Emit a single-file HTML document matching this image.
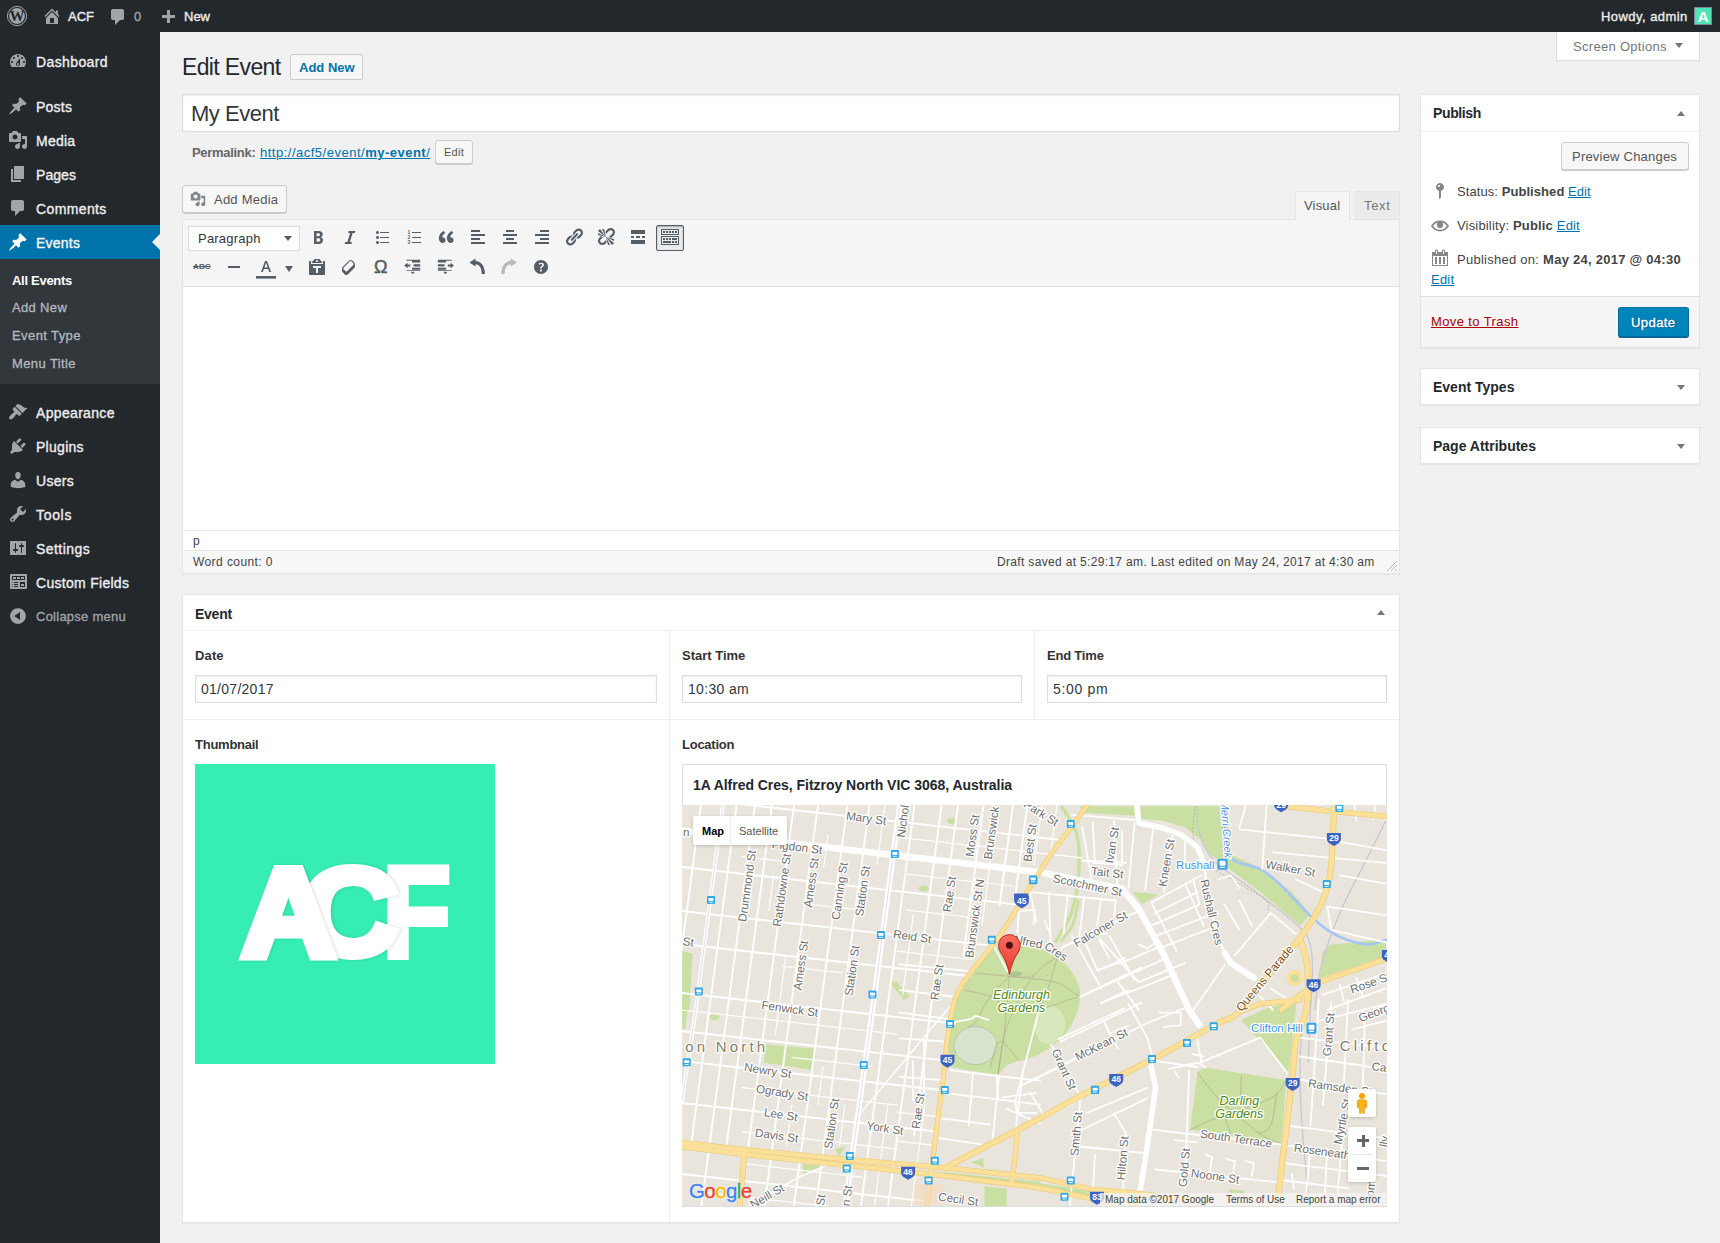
<!DOCTYPE html>
<html lang="en">
<head>
<meta charset="utf-8">
<title>Edit Event ‹ ACF — WordPress</title>
<style>
*{box-sizing:border-box;margin:0;padding:0}
html,body{width:1720px;height:1243px;overflow:hidden}
body{background:#f1f1f1;font-family:"Liberation Sans",sans-serif;font-size:13px;color:#444;line-height:1.4;position:relative}
a{color:#0073aa;text-decoration:underline}
.abs{position:absolute}
.t{position:absolute;white-space:nowrap;line-height:1}
svg{display:block;overflow:visible}
/* admin bar */
#bar{position:absolute;left:0;top:0;width:1720px;height:32px;background:#23282d;color:#eee}
#bar .t{color:#eee;font-size:13px;-webkit-text-stroke:.35px #eee}
#bar svg{position:absolute;fill:#a0a5aa}
/* side menu */
#menu{position:absolute;left:0;top:32px;width:160px;height:1211px;background:#23282d}
#menu .mi{position:absolute;left:0;width:160px;height:34px}
#menu .mi svg{position:absolute;left:8px;top:7px;width:20px;height:20px;fill:#a0a5aa}
#menu .mi span{position:absolute;left:36px;top:1px;line-height:34px;font-size:14px;color:#eee;white-space:nowrap;-webkit-text-stroke:.35px #eee}
#menu .cur{background:#0073aa}
#menu .cur svg{fill:#fff}
#menu .cur span{color:#fff}
#sub{position:absolute;left:0;top:227px;width:160px;height:125px;background:#32373c}
#sub span{position:absolute;left:12px;font-size:13px;line-height:18px;color:#b4b9be;white-space:nowrap;-webkit-text-stroke:.3px #b4b9be}
#sub span.on{color:#fff;font-weight:bold;-webkit-text-stroke:0}
/* boxes */
.box{position:absolute;background:#fff;border:1px solid #e5e5e5;box-shadow:0 1px 1px rgba(0,0,0,.04)}
.btn{position:absolute;background:#f7f7f7;border:1px solid #ccc;border-radius:3px;box-shadow:0 1px 0 #ccc;color:#555}
.h2{font-size:14px;font-weight:bold;color:#23282d}
.inp{position:absolute;background:#fff;border:1px solid #ddd;box-shadow:inset 0 1px 2px rgba(0,0,0,.07)}
.lbl{font-size:13px;font-weight:bold;color:#333}
.tb svg{position:absolute;width:20px;height:20px;fill:#555d66}
.tri{position:absolute;width:0;height:0;border-left:4px solid transparent;border-right:4px solid transparent}
</style>
</head>
<body>
<div id="bar">
  <svg style="left:7px;top:6px;width:20px;height:20px" viewBox="0 0 20 20"><circle cx="10" cy="10" r="9.600" fill="none" stroke="#a0a5aa" stroke-width="1"/><circle cx="10" cy="10" r="7.900" fill="#a0a5aa"/><text x="10" y="15.200" text-anchor="middle" font-family="Liberation Serif,serif" font-weight="bold" font-size="15" fill="#23282d">W</text></svg>
  <svg style="left:42px;top:6px;width:20px;height:20px" viewBox="0 0 20 20"><path d="M16 8.5l1.53 1.53-1.06 1.06L10 4.62l-6.47 6.47-1.06-1.06L10 2.5l4 4v-2h2v4zm-6-2.46l6 5.99V18H4v-5.97zM12 17v-5H8v5h4z"/></svg>
  <span class="t" style="left:68px;top:10px">ACF</span>
  <svg style="left:108px;top:7px;width:20px;height:20px" viewBox="0 0 20 20"><path d="M5 2h9q.82 0 1.41.59T16 4v7q0 .82-.59 1.41T14 13h-2l-5 5v-5H5q-.82 0-1.41-.59T3 11V4q0-.82.59-1.41T5 2z"/></svg>
  <span class="t" style="left:134px;top:10px;color:#a0a5aa;-webkit-text-stroke:.35px #a0a5aa">0</span>
  <svg style="left:158px;top:7px;width:20px;height:20px" viewBox="0 0 20 20"><path d="M17 7v3h-5v5H9v-5H4V7h5V2h3v5h5z" transform="translate(0,1)"/></svg>
  <span class="t" style="left:184px;top:10px">New</span>
  <span class="t" id="howdy" style="letter-spacing:0.45px;left:1601px;top:10px">Howdy, admin</span>
  <div class="abs" style="left:1694px;top:7px;width:18px;height:18px;background:#4ee4b7;border:1px solid #7e8993"><span class="t" style="left:2.500px;top:.5px;font-size:15.500px;font-weight:bold;color:#fff;-webkit-text-stroke:0">A</span></div>
</div>
<div id="menu">
  <div class="mi" style="top:12px"><svg viewBox="0 0 20 20"><path d="M3.76 16h12.48c1.1-1.37 1.76-3.11 1.76-5 0-4.42-3.58-8-8-8s-8 3.58-8 8c0 1.89.66 3.63 1.76 5zM10 4c.55 0 1 .45 1 1s-.45 1-1 1-1-.45-1-1 .45-1 1-1zM6 6c.55 0 1 .45 1 1s-.45 1-1 1-1-.45-1-1 .45-1 1-1zm8 0c.55 0 1 .45 1 1s-.45 1-1 1-1-.45-1-1 .45-1 1-1zm-5.37 5.55L12 7v6c0 1.1-.9 2-2 2s-2-.9-2-2c0-.57.24-1.08.63-1.45zM4 10c.55 0 1 .45 1 1s-.45 1-1 1-1-.45-1-1 .45-1 1-1zm12 0c.55 0 1 .45 1 1s-.45 1-1 1-1-.45-1-1 .45-1 1-1zm-5 3c0-.55-.45-1-1-1s-1 .45-1 1 .45 1 1 1 1-.45 1-1z"/></svg><span style="letter-spacing:0.39px">Dashboard</span></div>
  <div class="mi" style="top:57px"><svg viewBox="0 0 20 20"><path d="M10.44 3.02l1.82-1.82 6.36 6.35-1.83 1.82c-1.05-.68-2.48-.57-3.41.36l-.75.75c-.92.93-1.04 2.35-.35 3.41l-1.83 1.82-2.41-2.41-2.8 2.79c-.42.42-3.38 2.71-3.8 2.29s1.86-3.39 2.28-3.81l2.79-2.79L4.1 9.36l1.83-1.82c1.05.69 2.48.57 3.4-.36l.75-.75c.93-.92 1.05-2.35.36-3.41z"/></svg><span style="letter-spacing:0.25px">Posts</span></div>
  <div class="mi" style="top:91px"><svg viewBox="0 0 20 20"><path d="M13 11V4c0-.55-.45-1-1-1h-1.67L9 1H5L3.67 3H2c-.55 0-1 .45-1 1v7c0 .55.45 1 1 1h10c.55 0 1-.45 1-1zM7 4.5c1.38 0 2.5 1.12 2.5 2.5S8.38 9.5 7 9.5 4.5 8.38 4.5 7 5.62 4.5 7 4.5zM14 6h5v10.5c0 1.38-1.12 2.5-2.5 2.5S14 17.880 14 16.500s1.120-2.500 2.500-2.500c.17 0 .34.02.5.05V9h-3V6zm-4 8.05V13h2v3.500c0 1.380-1.120 2.500-2.500 2.500S7 17.880 7 16.500 8.120 14 9.500 14c.17 0 .34.02.5.05z"/></svg><span style="letter-spacing:0.24px">Media</span></div>
  <div class="mi" style="top:125px"><svg viewBox="0 0 20 20"><path d="M6 15V2h10v13H6zm-1 1h8v2H3V5h2v11z"/></svg><span style="letter-spacing:0.06px">Pages</span></div>
  <div class="mi" style="top:159px"><svg viewBox="0 0 20 20"><path d="M5 2h9q.82 0 1.41.59T16 4v7q0 .82-.59 1.41T14 13h-2l-5 5v-5H5q-.82 0-1.41-.59T3 11V4q0-.82.59-1.41T5 2z"/></svg><span style="letter-spacing:0.38px">Comments</span></div>
  <div class="mi cur" style="top:193px"><svg viewBox="0 0 20 20"><path d="M10.44 3.02l1.82-1.82 6.36 6.35-1.83 1.82c-1.05-.68-2.48-.57-3.41.36l-.75.75c-.92.93-1.04 2.35-.35 3.41l-1.83 1.82-2.41-2.41-2.8 2.79c-.42.42-3.38 2.71-3.8 2.29s1.86-3.39 2.28-3.81l2.79-2.79L4.1 9.36l1.83-1.82c1.05.69 2.48.57 3.4-.36l.75-.75c.93-.92 1.05-2.35.36-3.41z"/></svg><span style="letter-spacing:0.24px">Events</span>
    <div class="abs" style="right:0;top:9px;width:0;height:0;border:8px solid transparent;border-right-color:#f1f1f1"></div></div>
  <div id="sub">
    <span class="on" style="top:13px;letter-spacing:-0.29px">All Events</span>
    <span style="top:40px;letter-spacing:0.34px">Add New</span>
    <span style="top:68px;letter-spacing:0.41px">Event Type</span>
    <span style="top:96px;letter-spacing:0.40px">Menu Title</span>
  </div>
  <div class="mi" style="top:363px"><svg viewBox="0 0 20 20"><path d="M14.48 11.06L7.41 3.99l1.5-1.5c.5-.56 2.3-.47 3.51.32 1.21.8 1.43 1.28 2.91 2.1 1.18.64 2.45 1.26 4.45.85zm-.71.71L6.7 4.7 4.93 6.47c-.39.39-.39 1.02 0 1.41l1.06 1.06c.39.39.39 1.03 0 1.42-.6.6-1.43 1.11-2.21 1.69-.35.26-.7.53-1.01.84C1.43 14.23.4 16.08 1.4 17.07c.99 1 2.84-.03 4.18-1.36.31-.31.58-.66.85-1.02.57-.78 1.08-1.61 1.69-2.21.39-.39 1.02-.39 1.41 0l1.06 1.06c.39.39 1.02.39 1.41 0z"/></svg><span style="letter-spacing:0.33px">Appearance</span></div>
  <div class="mi" style="top:397px"><svg viewBox="0 0 20 20"><path d="M13.11 4.36L9.87 7.6 8 5.73l3.24-3.24c.35-.34 1.05-.2 1.56.32.52.51.66 1.21.31 1.55zm-8 1.77l.91-1.12 9.01 9.01-1.19.84c-.71.71-2.63 1.16-3.82 1.16H6.14L4.9 17.26c-.59.59-1.54.59-2.12 0-.59-.58-.59-1.53 0-2.12l1.24-1.24v-3.88c0-1.13.4-3.19 1.09-3.89zm7.26 3.97l3.24-3.24c.34-.35 1.04-.21 1.55.31.52.51.66 1.21.31 1.55l-3.24 3.25z"/></svg><span style="letter-spacing:0.28px">Plugins</span></div>
  <div class="mi" style="top:431px"><svg viewBox="0 0 20 20"><path d="M10 9.25c-2.27 0-2.73-3.44-2.73-3.44C7 4.02 7.82 2 9.97 2c2.16 0 2.98 2.02 2.71 3.81 0 0-.41 3.44-2.68 3.44zm0 2.57L12.72 10c2.39 0 4.52 2.33 4.52 4.53v2.49s-3.65 1.13-7.24 1.13c-3.65 0-7.24-1.13-7.24-1.13v-2.49c0-2.25 1.94-4.48 4.47-4.48z"/></svg><span style="letter-spacing:0.29px">Users</span></div>
  <div class="mi" style="top:465px"><svg viewBox="0 0 20 20"><path d="M16.68 9.77c-1.34 1.34-3.3 1.67-4.95.99l-5.41 6.52c-.99.99-2.59.99-3.58 0s-.99-2.59 0-3.57l6.52-5.42c-.68-1.65-.35-3.61.99-4.95 1.28-1.28 3.12-1.62 4.72-1.06l-2.89 2.89 2.82 2.82 2.86-2.87c.53 1.58.18 3.39-1.08 4.650zM3.81 16.21c.4.39 1.04.39 1.43 0 .4-.4.4-1.04 0-1.43-.39-.4-1.03-.4-1.43 0-.39.39-.39 1.03 0 1.43z"/></svg><span style="letter-spacing:0.68px">Tools</span></div>
  <div class="mi" style="top:499px"><svg viewBox="0 0 20 20"><path d="M18 16V4c0-.55-.45-1-1-1H3c-.55 0-1 .45-1 1v12c0 .55.45 1 1 1h14c.55 0 1-.45 1-1zM8 11h1c.55 0 1 .45 1 1s-.45 1-1 1H8v1.5c0 .28-.22.5-.5.5s-.5-.22-.5-.5V13H6c-.55 0-1-.45-1-1s.45-1 1-1h1V5.5c0-.28.22-.5.5-.5s.5.22.5.5V11zm5-2h-1c-.55 0-1-.45-1-1s.45-1 1-1h1V5.5c0-.28.22-.5.5-.5s.5.22.5.5V7h1c.55 0 1 .45 1 1s-.45 1-1 1h-1v5.5c0 .28-.22.5-.5.5s-.5-.22-.5-.5V9z"/></svg><span style="letter-spacing:0.45px">Settings</span></div>
  <div class="mi" style="top:533px"><svg viewBox="0 0 20 20"><path d="M19 16V3c0-.55-.45-1-1-1H3c-.55 0-1 .45-1 1v13c0 .55.45 1 1 1h15c.55 0 1-.45 1-1zM4 4h13v4H4V4zm1 1v2h3V5H5zm4 0v2h3V5H9zm4 0v2h3V5h-3zm-8.5 5c.28 0 .5.22.5.5s-.22.5-.5.5-.5-.22-.5-.5.22-.5.5-.5zM6 10h4v1H6v-1zm6 0h5v5h-5v-5zm-7.5 2c.28 0 .5.22.5.5s-.22.5-.5.5-.5-.22-.5-.5.22-.5.5-.5zM6 12h4v1H6v-1zm7 0v2h3v-2h-3zm-8.5 2c.28 0 .5.22.5.5s-.22.5-.5.5-.5-.22-.5-.5.22-.5.5-.5zM6 14h4v1H6v-1z"/></svg><span style="letter-spacing:0.29px">Custom Fields</span></div>
  <div class="mi" style="top:567px"><svg viewBox="0 0 20 20"><path d="M10 2.16c4.33 0 7.84 3.51 7.84 7.84s-3.51 7.84-7.84 7.84S2.16 14.33 2.16 10 5.67 2.16 10 2.16zm2 11.72V6.12L6.18 9.97z"/></svg><span style="font-size:13px;color:#a0a5aa;-webkit-text-stroke:.3px #a0a5aa;letter-spacing:0.25px">Collapse menu</span></div>
</div>
<!-- Screen options -->
<div class="abs" style="left:1556px;top:32px;width:144px;height:29px;background:#fff;border:1px solid #ddd;border-top:none;box-shadow:0 1px 1px -1px rgba(0,0,0,.1)"></div>
<span class="t" id="so" style="letter-spacing:0.30px;left:1573px;top:40px;font-size:13px;color:#72777c">Screen Options</span>
<div class="tri" style="left:1675px;top:43px;border-top:5px solid #72777c"></div>

<!-- heading -->
<span class="t" id="h1" style="letter-spacing:-0.63px;left:182px;top:54px;font-size:23px;color:#23282d;line-height:26px">Edit Event</span>
<div class="btn" style="left:290px;top:54px;width:73px;height:26px;box-shadow:none;background:#f7f7f7;border-radius:2px"></div>
<span class="t" id="addnew" style="left:299px;top:61px;font-size:13px;font-weight:bold;color:#0073aa">Add New</span>

<!-- title -->
<div class="inp" style="left:182px;top:94px;width:1218px;height:38px"></div>
<span class="t" id="title" style="letter-spacing:-0.46px;left:191px;top:101px;font-size:22px;color:#32373c;line-height:26px">My Event</span>

<!-- permalink -->
<span class="t" id="pl" style="letter-spacing:-0.30px;left:192px;top:146px;font-size:13px;font-weight:bold;color:#666">Permalink:</span>
<a class="t" id="url" style="letter-spacing:0.50px;left:260px;top:146px;font-size:13px">http://acf5/event/<b>my-event</b>/</a>
<div class="btn" style="left:435px;top:140px;width:38px;height:24px"></div>
<span class="t" id="ed0" style="letter-spacing:0.26px;left:444px;top:147px;font-size:11px;color:#555">Edit</span>

<!-- add media -->
<div class="btn" style="left:182px;top:185px;width:105px;height:28px"></div>
<svg class="abs" style="left:190px;top:191px;width:16px;height:16px;fill:#82878c" viewBox="0 0 20 20"><path d="M13 11V4c0-.55-.45-1-1-1h-1.67L9 1H5L3.67 3H2c-.55 0-1 .45-1 1v7c0 .55.45 1 1 1h10c.55 0 1-.45 1-1zM7 4.5c1.38 0 2.5 1.12 2.5 2.5S8.38 9.5 7 9.5 4.5 8.38 4.500 7 5.620 4.500 7 4.500zM14 6h5v10.500c0 1.380-1.120 2.500-2.500 2.500S14 17.880 14 16.500s1.120-2.500 2.500-2.500c.17 0 .34.02.5.05V9h-3V6zm-4 8.050V13h2v3.500c0 1.380-1.120 2.500-2.500 2.500S7 17.880 7 16.500 8.120 14 9.500 14c.17 0 .34.02.5.05z"/></svg>
<span class="t" id="am" style="letter-spacing:0.23px;left:214px;top:193px;font-size:13px;color:#555">Add Media</span>

<!-- tabs -->
<div class="abs" style="left:1295px;top:191px;width:55px;height:29px;background:#f5f5f5;border:1px solid #e5e5e5;border-bottom:none"></div>
<div class="abs" style="left:1355px;top:191px;width:45px;height:28px;background:#ebebeb;border:1px solid #e5e5e5;border-bottom:none"></div>
<span class="t" id="tv" style="letter-spacing:0.18px;left:1304px;top:199px;font-size:13px;color:#555">Visual</span>
<span class="t" id="tt" style="letter-spacing:0.66px;left:1364px;top:199px;font-size:13px;color:#777">Text</span>

<!-- editor -->
<div class="abs" style="left:182px;top:219px;width:1218px;height:355px;background:#fff;border:1px solid #e5e5e5;box-shadow:0 1px 1px rgba(0,0,0,.04)"></div>
<div class="abs" style="left:183px;top:220px;width:1216px;height:67px;background:#f5f5f5;border-bottom:1px solid #ddd"></div>
<div class="abs" style="left:1296px;top:219px;width:53px;height:2px;background:#f5f5f5"></div>
<div class="abs" style="left:183px;top:530px;width:1216px;height:20px;background:#fff;border-top:1px solid #e5e5e5"></div>
<div class="abs" style="left:183px;top:550px;width:1216px;height:23px;background:#f7f7f7;border-top:1px solid #e5e5e5"></div>
<span class="t" id="pp" style="left:193px;top:534.500px;font-size:12px;color:#444">p</span>
<span class="t" id="wc" style="letter-spacing:0.42px;left:193px;top:556px;font-size:12px;color:#444">Word count: 0</span>
<span class="t" id="ds" style="letter-spacing:0.33px;left:997px;top:556px;font-size:12px;color:#444">Draft saved at 5:29:17 am. Last edited on May 24, 2017 at 4:30 am</span>
<svg class="abs" style="left:1386px;top:560px;width:12px;height:12px" viewBox="0 0 12 12"><path d="M11 1L1 11M11 5L5 11M11 9L9 11" stroke="#bbb" stroke-width="1" fill="none"/></svg>

<!-- toolbar -->
<div class="abs" style="left:188px;top:226px;width:112px;height:25px;background:#fff;border:1px solid #ddd;box-shadow:inset 0 1px 1px -1px rgba(0,0,0,.2)"></div>
<span class="t" id="para" style="letter-spacing:0.21px;left:198px;top:232px;font-size:13px;color:#32373c">Paragraph</span>
<div class="tri" style="left:284px;top:236px;border-top:5px solid #555d66"></div>
<div class="abs" style="left:656px;top:225px;width:28px;height:26px;background:#ebebeb;border:1px solid #555d66;border-radius:2px;box-shadow:inset 0 1px 2px rgba(0,0,0,.3)"></div>
<div class="tb" id="tb">
<svg style="left:308px;top:227px" viewBox="0 0 20 20"><path d="M6 4v13h4.54c1.37 0 2.46-.33 3.26-1 .8-.66 1.2-1.58 1.2-2.77 0-.84-.17-1.51-.51-2.01s-.9-.85-1.67-1.03v-.09c.57-.1 1.02-.4 1.36-.9s.51-1.13.51-1.91c0-1.14-.39-1.98-1.17-2.5C12.75 4.26 11.5 4 9.78 4H6zm2.57 5.15V6.26h1.36c.73 0 1.27.11 1.61.32.34.22.51.58.51 1.07 0 .54-.16.92-.47 1.15s-.82.35-1.51.35h-1.5zm0 2.190h1.600c1.440 0 2.160.53 2.160 1.610 0 .6-.17 1.05-.51 1.340s-.86.43-1.570.43H8.570v-3.380z"/></svg>
<svg style="left:340px;top:227px" viewBox="0 0 20 20"><path d="M14.78 6h-2.13l-2.8 9h2.12l-.62 2H4.6l.62-2h2.14l2.8-9H8.030l.62-2h6.750z"/></svg>
<svg style="left:372px;top:227px" viewBox="0 0 20 20"><path d="M5.5 7C4.670 7 4 6.330 4 5.500 4 4.680 4.670 4 5.500 4 6.320 4 7 4.680 7 5.500 7 6.330 6.320 7 5.500 7zM8 5h9v1H8V5zm-2.500 7c-.83 0-1.500-.67-1.500-1.500C4 9.680 4.670 9 5.500 9c.82 0 1.500.68 1.500 1.500 0 .83-.68 1.500-1.500 1.500zM8 10h9v1H8v-1zm-2.500 7c-.83 0-1.500-.67-1.500-1.500 0-.82.67-1.500 1.500-1.500.82 0 1.500.68 1.500 1.500 0 .83-.68 1.500-1.500 1.500zM8 15h9v1H8v-1z"/></svg>
<svg style="left:404px;top:227px" viewBox="0 0 20 20"><path d="M8 5h9v1H8V5zm0 5h9v1H8v-1zm0 5h9v1H8v-1z"/><text x="3.600" y="7" font-size="5" font-family="Liberation Sans,sans-serif" font-weight="bold">1</text><text x="3.600" y="12" font-size="5" font-family="Liberation Sans,sans-serif" font-weight="bold">2</text><text x="3.600" y="17" font-size="5" font-family="Liberation Sans,sans-serif" font-weight="bold">3</text></svg>
<svg style="left:436px;top:227px" viewBox="0 0 20 20"><path d="M9.490 13.220c0-.74-.2-1.380-.61-1.900-.62-.78-1.830-.88-2.530-.72-.29-1.650 1.110-3.750 2.920-4.650L7.880 4c-2.730 1.300-5.420 4.280-4.960 8.050C3.210 14.430 4.590 16 6.540 16c.85 0 1.560-.25 2.120-.75s.83-1.180.83-2.030zm8.050 0c0-.74-.2-1.380-.61-1.900-.63-.78-1.830-.88-2.530-.72-.29-1.650 1.110-3.750 2.920-4.650L15.930 4c-2.730 1.300-5.410 4.280-4.950 8.050.29 2.380 1.660 3.950 3.610 3.950.85 0 1.560-.25 2.120-.75s.83-1.180.83-2.030z"/></svg>
<svg style="left:468px;top:227px" viewBox="0 0 20 20"><path d="M12 5V3H3v2h9zm5 4V7H3v2h14zm-5 4v-2H3v2h9zm5 4v-2H3v2h14z"/></svg>
<svg style="left:500px;top:227px" viewBox="0 0 20 20"><path d="M14 5V3H6v2h8zm3 4V7H3v2h14zm-3 4v-2H6v2h8zm3 4v-2H3v2h14z"/></svg>
<svg style="left:532px;top:227px" viewBox="0 0 20 20"><path d="M17 5V3H8v2h9zm0 4V7H3v2h14zm0 4v-2H8v2h9zm0 4v-2H3v2h14z"/></svg>
<svg style="left:564px;top:227px" viewBox="0 0 20 20"><path d="M17.740 2.760c1.680 1.690 1.680 4.410 0 6.100l-1.530 1.520c-1.120 1.120-2.700 1.470-4.140 1.090l2.620-2.610.76-.77.76-.76c.84-.84.84-2.200 0-3.040-.84-.85-2.200-.85-3.040 0l-.77.76-3.380 3.380c-.37-1.440-.02-3.020 1.100-4.140l1.520-1.530c1.690-1.680 4.420-1.680 6.100 0zM8.590 13.430l5.340-5.340c.42-.42.42-1.100 0-1.520-.44-.43-1.130-.39-1.530 0l-5.330 5.340c-.42.42-.42 1.100 0 1.520.44.43 1.130.39 1.520 0zm-.76 2.290l4.140-4.150c.38 1.440.03 3.020-1.090 4.140l-1.520 1.530c-1.690 1.680-4.410 1.680-6.100 0-1.680-1.680-1.680-4.420 0-6.100l1.530-1.520c1.120-1.120 2.700-1.470 4.140-1.100l-4.140 4.150c-.85.84-.85 2.200 0 3.050.84.84 2.200.84 3.040 0z"/></svg>
<svg style="left:596px;top:227px" viewBox="0 0 20 20"><path d="M17.740 2.260c1.680 1.690 1.680 4.410 0 6.100l-1.530 1.520c-.32.33-.69.58-1.080.77L13 10l1.690-1.640.76-.77.76-.76c.84-.84.84-2.200 0-3.040-.84-.85-2.200-.85-3.040 0l-.77.76-.76.76L10 7l-.65-2.140c.19-.38.44-.75.77-1.070l1.520-1.530c1.690-1.680 4.420-1.680 6.100 0zM2 4l8 6-6-8zm4-2l4 8-2-8H6zM2 6l8 4-8-2V6zm7.360 7.690L10 13l.74 2.350-1.380 1.390c-1.690 1.680-4.410 1.680-6.100 0-1.680-1.680-1.680-4.420 0-6.100l1.390-1.380L7 10l-.69.64-1.520 1.530c-.85.84-.85 2.200 0 3.040.84.85 2.200.85 3.040 0zM18 16l-8-6 6 8zm-4 2l-4-8 2 8h2zm4-4l-8-4 8 2v2z"/></svg>
<svg style="left:628px;top:227px" viewBox="0 0 20 20"><path d="M17 7V3H3v4h14zM6 11V9H3v2h3zm6 0V9H8v2h4zm5 0V9h-3v2h3zm0 6v-4H3v4h14z"/></svg>
<svg style="left:660px;top:227px" viewBox="0 0 20 20"><path d="M19 2v6H1V2h18zm-1 5V3H2v4h16zM5 4v2H3V4h2zm3 0v2H6V4h2zm3 0v2H9V4h2zm3 0v2h-2V4h2zm3 0v2h-2V4h2zm2 5v9H1V9h18zm-1 8v-7H2v7h16zM5 11v2H3v-2h2zm3 0v2H6v-2h2zm3 0v2H9v-2h2zm6 0v2h-5v-2h5zm-6 3v2H3v-2h8zm3 0v2h-2v-2h2zm3 0v2h-2v-2h2z"/></svg>
<span class="t" style="left:193px;top:263px;font-size:8px;font-weight:bold;color:#555d66;text-decoration:line-through;letter-spacing:.1px">ABC</span>
<svg style="left:224px;top:257px" viewBox="0 0 20 20"><path d="M4 9h12v2H4V9z"/></svg>
<svg style="left:256px;top:256.5px" viewBox="0 0 20 20"><path d="M13.230 15h1.900L11 4H9L5 15h1.880l1.070-3h4.180zm-1.530-4.540H8.510L10 5.600z"/><rect x="0" y="19" width="20" height="2.600" fill="#555d66"/></svg>
<div class="tri" style="left:284.500px;top:266px;border-left-width:4.500px;border-right-width:4.500px;border-top:6px solid #555d66"></div>
<svg style="left:307px;top:257px" viewBox="0 0 20 20"><path d="M12.380 2L15 5v1H5V5l2.640-3h4.740zM10 5c.55 0 1-.44 1-1 0-.55-.45-1-1-1s-1 .45-1 1c0 .56.45 1 1 1zm5.450-1H17c.55 0 1 .45 1 1v12c0 .56-.45 1-1 1H3c-.55 0-1-.44-1-1V5c0-.55.45-1 1-1h1.550L4 4.630V7h12V4.630zM14 11V9H6v2h3v5h2v-5h3z"/></svg>
<svg style="left:339px;top:257px" viewBox="0 0 20 20"><path d="M14.290 4.590l1.100 1.110c.41.4.61.94.61 1.470v2.120c0 .53-.2 1.070-.61 1.470l-6.630 6.630c-.4.41-.94.61-1.470.61s-1.070-.2-1.470-.61l-1.110-1.100-1.100-1.110c-.41-.4-.61-.94-.61-1.470v-2.120c0-.54.2-1.070.61-1.480l6.630-6.620c.4-.41.94-.61 1.470-.61s1.060.2 1.470.61zm-6.210 9.700l6.420-6.420c.39-.39.39-1.030 0-1.430L12.360 4.300c-.19-.19-.45-.29-.72-.29s-.52.1-.71.29l-6.420 6.420c-.39.4-.39 1.040 0 1.430l2.140 2.140c.38.38 1.040.38 1.430 0z"/></svg>
<span class="t" style="left:374px;top:257px;font-size:18px;font-family:Liberation Sans,sans-serif;color:#555d66;-webkit-text-stroke:.5px #555d66;line-height:20px">Ω</span>
<svg style="left:403px;top:257px" viewBox="0 0 20 20"><path d="M3.4 2.800H9v.9H3.4z M9 2.800h8.200v2.800H9z M10.600 7.200h6.600v2.200h-6.600z M9 10.800h8.200v2H9z M3.4 13.200h13.800v.9H3.4z M8.4 14.700h2.800v1.800H8.4z M1.200 8.500l3.300-2.700v1.700h2.800v2H4.500v1.700z"/></svg>
<svg style="left:435px;top:257px" viewBox="0 0 20 20"><path d="M16.700 2.800H11.100v.9H16.700z M11.100 2.800H2.900v2.800H11.100z M9.500 7.200H2.900v2.200H9.500z M11.100 10.800H2.900v2H11.100z M16.700 13.200H2.900v.9H16.700z M11.700 14.700H8.900v1.800H11.700z M18.900 8.500l-3.300-2.700v1.700H12.800v2H15.600v1.700z"/></svg>
<svg style="left:467px;top:257px" viewBox="0 0 20 20"><path d="M2.400 5.500L8.500 1.600v2.400C14 4 18 9 17.900 17.100h-3.300C15 11.500 12.500 7.500 8.500 7.300v2.100z"/></svg>
<svg style="left:499px;top:257px;fill:#b4b9be" viewBox="0 0 20 20"><path d="M17.900 5.500L11.800 1.600v2.400C6.300 4 2.300 9 2.400 17.100h3.300C5.300 11.500 7.800 7.500 11.800 7.300v2.100z"/></svg>
<svg style="left:531px;top:257px" viewBox="0 0 20 20"><path d="M17 10c0-3.870-3.140-7-7-7-3.870 0-7 3.130-7 7s3.130 7 7 7c3.860 0 7-3.130 7-7zm-6.300 1.480H9.140v-.43c0-.38.08-.7.24-.98s.46-.57.88-.89c.41-.29.68-.53.81-.71.14-.18.2-.39.2-.62 0-.25-.09-.44-.28-.58-.19-.13-.45-.19-.79-.19-.58 0-1.250.19-2 .57l-.64-1.280c.87-.49 1.800-.74 2.770-.74.81 0 1.450.2 1.920.58.48.39.71.91.71 1.550 0 .43-.09.8-.29 1.110-.19.32-.57.67-1.110 1.060-.38.28-.61.49-.71.63-.1.15-.15.34-.15.57v.35zm-1.470 2.740c-.18-.17-.27-.42-.27-.73 0-.33.08-.58.26-.75s.43-.25.77-.25c.32 0 .57.09.75.26s.27.42.27.74c0 .3-.09.55-.27.72-.18.18-.43.27-.75.27-.33 0-.58-.09-.76-.26z"/></svg>
</div>

<!-- publish box -->
<div class="box" style="left:1420px;top:94px;width:280px;height:254px"></div>
<div class="abs" style="left:1421px;top:131px;width:278px;height:1px;background:#eee"></div>
<span class="t h2" id="pub" style="letter-spacing:-0.37px;left:1433px;top:106px">Publish</span>
<div class="tri" style="left:1677px;top:111px;border-bottom:5px solid #72777c;border-left-width:4px;border-right-width:4px"></div>
<div class="btn" style="left:1561px;top:142px;width:128px;height:28px"></div>
<span class="t" id="pc" style="letter-spacing:0.21px;left:1572px;top:150px;font-size:13px;color:#555">Preview Changes</span>
<svg class="abs" style="left:1430px;top:181px;width:20px;height:20px;fill:#82878c" viewBox="0 0 20 20"><path d="M14 6c0 1.860-1.280 3.410-3 3.860V16c0 1-2 2-2 2V9.860c-1.720-.450-3-2-3-3.860 0-2.210 1.790-4 4-4s4 1.790 4 4zM8 5c0 .55.45 1 1 1s1-.45 1-1-.45-1-1-1-1 .45-1 1z"/></svg>
<span class="t" id="st" style="letter-spacing:0.07px;left:1457px;top:185px;font-size:13px;color:#444">Status: <b>Published</b> <a>Edit</a></span>
<svg class="abs" style="left:1431px;top:216.500px;width:18px;height:18px;fill:#82878c" viewBox="0 0 20 20"><path d="M19.700 9.400C17.700 6 14 3.900 10 3.900S2.300 6 .3 9.400L0 10l.3.600c2 3.400 5.700 5.500 9.700 5.500s7.700-2.100 9.700-5.500l.3-.600-.3-.600zM10 14.100c-3.100 0-6-1.600-7.700-4.100C3.600 8 5.700 6.600 8 6.100c-.9.600-1.500 1.700-1.500 2.900 0 1.900 1.600 3.500 3.500 3.500s3.500-1.600 3.500-3.500c0-1.200-.6-2.300-1.500-2.900 2.300.5 4.400 1.900 5.700 3.900-1.700 2.500-4.600 4.100-7.700 4.100z"/></svg>
<span class="t" id="vi" style="letter-spacing:0.17px;left:1457px;top:219px;font-size:13px;color:#444">Visibility: <b>Public</b> <a>Edit</a></span>
<svg class="abs" style="left:1430px;top:248px;width:20px;height:20px;fill:#82878c" viewBox="0 0 20 20"><path d="M15 4h3v14H2V4h3V3c0-.83.67-1.500 1.500-1.500S8 2.170 8 3v1h4V3c0-.83.67-1.500 1.500-1.500S15 2.170 15 3v1zM6 3v2.500c0 .28.22.5.5.5s.5-.22.5-.5V3c0-.28-.22-.5-.5-.5S6 2.720 6 3zm7 0v2.500c0 .28.22.5.5.5s.5-.22.5-.5V3c0-.28-.22-.5-.5-.5s-.5.22-.5.5zm4 14V8H3v9h14zM7 16V9H5v7h2zm4 0V9H9v7h2zm4 0V9h-2v7h2z"/></svg>
<span class="t" id="po" style="letter-spacing:0.26px;left:1457px;top:253px;font-size:13px;color:#444">Published on: <b>May 24, 2017 @ 04:30</b></span>
<a class="t" id="ed3" style="letter-spacing:0.21px;left:1431px;top:273px;font-size:13px">Edit</a>
<div class="abs" style="left:1421px;top:296px;width:278px;height:51px;background:#f5f5f5;border-top:1px solid #ddd"></div>
<a class="t" id="trash" style="letter-spacing:0.39px;left:1431px;top:315px;font-size:13px;color:#a00">Move to Trash</a>
<div class="abs" style="left:1618px;top:307px;width:71px;height:30px;background:#0085ba;border:1px solid #006799;border-color:#0073aa #006799 #006799;border-radius:3px;box-shadow:0 1px 0 #006799"></div>
<span class="t" id="upd" style="letter-spacing:0.43px;left:1631px;top:316px;font-size:13px;color:#fff;-webkit-text-stroke:.35px #fff;text-shadow:0 -1px 1px #006799,1px 0 1px #006799,0 1px 1px #006799,-1px 0 1px #006799">Update</span>

<div class="box" style="left:1420px;top:368px;width:280px;height:37px"></div>
<span class="t h2" id="et" style="left:1433px;top:380px">Event Types</span>
<div class="tri" style="left:1677px;top:385px;border-top:5px solid #72777c"></div>
<div class="box" style="left:1420px;top:427px;width:280px;height:37px"></div>
<span class="t h2" id="pa" style="left:1433px;top:439px">Page Attributes</span>
<div class="tri" style="left:1677px;top:444px;border-top:5px solid #72777c"></div>

<!-- Event metabox -->
<div class="box" style="left:182px;top:594px;width:1218px;height:629px"></div>
<div class="abs" style="left:183px;top:630px;width:1216px;height:1px;background:#eee"></div>
<span class="t h2" id="ev" style="letter-spacing:-0.25px;left:195px;top:607px">Event</span>
<div class="tri" style="left:1377px;top:610px;border-bottom:5px solid #72777c"></div>
<div class="abs" style="left:669px;top:631px;width:1px;height:591px;background:#eee"></div>
<div class="abs" style="left:1034px;top:631px;width:1px;height:88px;background:#eee"></div>
<div class="abs" style="left:183px;top:719px;width:1216px;height:1px;background:#eee"></div>
<span class="t lbl" id="l1" style="letter-spacing:0.13px;left:195px;top:649px">Date</span>
<span class="t lbl" id="l2" style="left:682px;top:649px">Start Time</span>
<span class="t lbl" id="l3" style="letter-spacing:-0.20px;left:1047px;top:649px">End Time</span>
<div class="inp" style="left:195px;top:675px;width:462px;height:28px"></div>
<div class="inp" style="left:682px;top:675px;width:340px;height:28px"></div>
<div class="inp" style="left:1047px;top:675px;width:340px;height:28px"></div>
<span class="t" id="v1" style="letter-spacing:0.27px;left:201px;top:682px;font-size:14px;color:#32373c">01/07/2017</span>
<span class="t" id="v2" style="letter-spacing:0.33px;left:688px;top:682px;font-size:14px;color:#32373c">10:30 am</span>
<span class="t" id="v3" style="letter-spacing:0.66px;left:1053px;top:682px;font-size:14px;color:#32373c">5:00 pm</span>
<span class="t lbl" id="l4" style="letter-spacing:-0.25px;left:195px;top:738px">Thumbnail</span>
<span class="t lbl" id="l5" style="letter-spacing:-0.25px;left:682px;top:738px">Location</span>

<!-- thumbnail -->
<svg class="abs" style="left:195px;top:764px;width:300px;height:300px" viewBox="0 0 300 300">
<rect width="300" height="300" fill="#36edb4"/>
<g font-family="Liberation Sans,sans-serif" font-weight="bold" fill="#fff" stroke="#fff" stroke-linejoin="miter">
<text id="lgF" transform="translate(187.39 193.2) scale(.859 1)" font-size="130.1" stroke-width="6">F</text>
<text id="lgC" transform="translate(106.32 191.08) scale(1.0888 1)" font-size="123.9" stroke-width="8" style="filter:drop-shadow(1.5px 0 1.5px rgba(0,0,0,.13))">C</text>
<text id="lgA" transform="translate(46.4 191.7) scale(1.0339 1)" font-size="125.7" stroke-width="9" style="filter:drop-shadow(1.5px 0 1.5px rgba(0,0,0,.13))">A</text>
</g>
</svg>

<!-- location -->
<div class="abs" style="left:682px;top:764px;width:705px;height:443px;border:1px solid #ddd;background:#fff"></div>
<span class="t" id="addr" style="letter-spacing:-0.03px;left:693px;top:778px;font-size:14px;font-weight:bold;color:#23282d">1A Alfred Cres, Fitzroy North VIC 3068, Australia</span>
<div class="abs" style="left:682px;top:805px;width:705px;height:401px;overflow:hidden;background:#e9e5dc">
<svg width="705" height="401" viewBox="0 0 705 401" font-family="Liberation Sans,sans-serif">
<rect width="705" height="401" fill="#e9e5dc"/>
<path d="M269.2 262.3 C268.7 258.5 266.7 247.3 266.6 239.8 C266.4 232.3 267.0 224.8 268.2 217.2 C269.3 209.7 271.0 201.7 273.5 194.7 C276.0 187.8 279.4 181.3 283.1 175.4 C286.9 169.5 291.9 164.1 296.0 159.3 C300.2 154.6 305.3 149.5 308.1 146.8 C310.9 144.1 309.1 144.4 312.9 143.3 C316.7 142.1 325.0 140.4 330.6 140.0 C336.2 139.6 341.3 140.0 346.7 140.8 C352.0 141.6 357.4 142.6 362.8 144.9 C368.1 147.1 374.3 150.8 378.8 154.5 C383.4 158.3 387.2 163.1 390.1 167.4 C393.1 171.7 395.2 176.2 396.5 180.3 C397.9 184.3 398.4 187.0 398.2 191.5 C397.9 196.1 396.8 202.2 394.9 207.6 C393.1 213.0 390.1 218.9 386.9 223.7 C383.7 228.5 379.7 232.8 375.6 236.5 C371.6 240.3 367.6 243.4 362.8 246.2 C357.9 249.0 351.0 251.8 346.7 253.4 C342.4 255.0 340.5 254.8 337.0 255.8 C333.5 256.9 329.4 257.5 325.8 259.9 C322.2 262.2 317.2 268.2 315.5 269.8Z" fill="#c9e0a2"/>
<path d="M83.8 239.4 L131.9 243.6 L129.9 265.1 L81.7 257.8Z" fill="#c9e0a2"/>
<path d="M515.4 267.2 L523.8 262.4 L604.4 275.2 L599.2 338.4 L508.1 324.8Z" fill="#c9e0a2"/>
<path d="M559.4 214.9 L584.5 203.4 L614.8 195.0 L606.5 267.2Z" fill="#c9e0a2"/>
<path d="M458.9 1.3 L544.7 1.3 L548.9 49.4 L578.2 63.0 L609.6 87.1 L628.5 109.1 L618.0 120.6 L578.2 87.1 L548.9 65.1 L525.9 47.3 L521.7 36.9 L502.9 22.2 L481.9 15.9 L458.9 13.8Z" fill="#c9e0a2"/>
<path d="M649.4 139.4 L703.8 134.2 L703.8 150.9 L637.9 172.9 L640.0 147.8Z" fill="#c9e0a2"/>
<path d="M450.6 87.1 L476.7 89.2 L460.0 99.2Z" fill="#c9e0a2"/>
<path d="M398.2 1.3 L452.6 1.3 L452.6 10.7 L400.3 7.6Z" fill="#c9e0a2"/>
<path d="M0.1 145.7 L10.6 148.8 L7.4 204.9 L0.1 204.9Z" fill="#c9e0a2"/>
<path d="M0.1 195.0 L6.8 195.0 L3.2 224.3 L0.1 224.3Z" fill="#c9e0a2"/>
<path d="M120.4 359.3 L144.5 360.8 L121.5 370.4Z" fill="#c9e0a2"/>
<path d="M152.9 344.6 L163.3 341.5 L157.1 350.9Z" fill="#c9e0a2"/>
<path d="M288.9 357.2 L301.5 353.0 L301.5 362.4Z" fill="#c9e0a2"/>
<path d="M302.5 381.3 L324.5 383.4 L324.5 401.2 L302.5 401.2Z" fill="#c9e0a2"/>
<path d="M261.7 367.0 L358.0 376.7 L358.0 380.2 L261.7 370.4Z" fill="#c9e0a2"/>
<path d="M348.0 376.7 L410.8 386.5 L410.8 390.7 L348.0 380.9Z" fill="#c9e0a2"/>
<path d="M208.3 178.1 L213.6 176.0 L228.2 191.7 L221.9 194.9Z" fill="#c9e0a2"/>
<path d="M546.8 384.4 L561.5 385.5 L561.5 388.6 L546.8 387.5Z" fill="#c9e0a2"/>
<ellipse cx="32.5" cy="212.2" rx="5" ry="3" fill="#c9e0a2"/>
<ellipse cx="270.1" cy="15.9" rx="5" ry="3" fill="#c9e0a2"/>
<ellipse cx="241.8" cy="83.3" rx="5" ry="3" fill="#c9e0a2"/>
<path d="M379.4 1.3 C381.7 5.1 390.0 16.6 393.0 24.3 C396.0 32.0 396.8 37.6 397.2 47.3 C397.5 57.1 396.7 72.1 395.1 82.9 C393.5 93.7 391.4 103.1 387.8 112.2 C384.1 121.3 375.6 133.1 373.1 137.3" fill="none" stroke="#c9e0a2" stroke-width="3.5"/>
<path d="M396.5 95.0 C395.6 99.0 393.9 112.2 390.9 119.1 C388.0 126.1 380.9 133.9 378.8 136.8" fill="none" stroke="#c9e0a2" stroke-width="3"/>
<ellipse cx="293.6" cy="240.6" rx="21.500" ry="19" fill="#d6e4cd" stroke="#b9bba0" stroke-width=".8"/>
<ellipse cx="368.4" cy="222.1" rx="14" ry="17.500" fill="#d8e8bd" transform="rotate(25 368.4 222.1)"/>
<ellipse cx="366.8" cy="218.0" rx="14" ry="17" fill="#d8e8bd" transform="rotate(25 366.8 218.0)"/>
<path d="M293.6 168.2 C299.2 168.7 314.2 169.9 327.4 171.4 C340.5 172.9 361.6 174.2 372.4 177.0 C383.3 179.8 388.2 185.9 392.5 188.3 C396.8 190.7 397.2 191.0 398.2 191.5" fill="none" stroke="#b7b090" stroke-width=".8"/>
<path d="M327.4 171.4 C324.2 174.8 313.7 183.9 308.1 191.5 C302.4 199.1 297.4 212.2 293.6 217.2 C289.8 222.3 286.9 221.3 285.6 222.1" fill="none" stroke="#b7b090" stroke-width=".8"/>
<path d="M327.4 171.4 C326.6 180.1 324.4 207.3 322.6 223.7 C320.7 240.0 317.2 261.9 316.1 269.5" fill="none" stroke="#b7b090" stroke-width=".8"/>
<path d="M375.6 151.3 C371.6 154.5 359.0 161.2 351.5 170.6 C344.0 180.0 335.7 196.6 330.6 207.6 C325.5 218.6 323.4 226.2 320.9 236.5 C318.5 246.9 316.9 264.0 316.1 269.5" fill="none" stroke="#b7b090" stroke-width=".8"/>
<path d="M375.6 151.3 C374.3 155.9 370.8 169.3 367.6 178.6 C364.4 188.0 358.2 202.8 356.3 207.6" fill="none" stroke="#b7b090" stroke-width=".8"/>
<path d="M282.3 185.1 C286.6 186.1 298.4 187.8 308.1 191.5 C317.7 195.3 325.5 207.6 340.2 207.6 C355.0 207.6 387.2 194.2 396.5 191.5" fill="none" stroke="#b7b090" stroke-width=".8"/>
<path d="M327.4 171.4 C329.5 171.5 336.2 172.3 340.2 172.2 C344.3 172.1 349.6 170.9 351.5 170.6" fill="none" stroke="#b7b090" stroke-width=".8"/>
<path d="M320.9 236.5 L337.0 255.8" fill="none" stroke="#b7b090" stroke-width=".8"/>
<path d="M308.1 263.9 C309.1 259.9 312.4 244.3 314.5 239.8 C316.7 235.2 319.9 237.1 320.9 236.5" fill="none" stroke="#b7b090" stroke-width=".8"/>
<path d="M515.4 267.2 C518.9 271.6 525.9 283.1 536.4 293.4 C546.8 303.7 567.8 321.4 578.2 328.9 C588.7 336.4 595.7 336.8 599.2 338.4" fill="none" stroke="#b7b090" stroke-width=".8"/>
<path d="M604.4 275.2 C601.8 278.2 600.0 287.2 588.7 293.4 C577.3 299.5 549.8 307.0 536.4 312.2 C522.9 317.4 512.8 322.7 508.1 324.8" fill="none" stroke="#b7b090" stroke-width=".8"/>
<path d="M559.4 270.3 L558.3 295.5" fill="none" stroke="#b7b090" stroke-width=".8"/>
<path d="M536.4 293.4 L548.9 328.9" fill="none" stroke="#b7b090" stroke-width=".8"/>
<path d="M595.0 287.1 C593.9 292.7 591.8 313.6 588.7 320.6 C585.5 327.6 578.2 327.6 576.1 328.9" fill="none" stroke="#b7b090" stroke-width=".8"/>
<path d="M541.6 1.3 C541.9 5.5 543.0 18.4 543.7 26.4 C544.4 34.4 543.5 44.2 545.8 49.4 C548.0 54.6 551.9 55.3 557.3 57.8 C562.7 60.2 571.9 60.9 578.2 64.1 C584.5 67.2 589.7 72.1 595.0 76.6 C600.2 81.2 604.4 85.9 609.6 91.3 C614.8 96.7 620.4 103.5 626.4 109.1 C632.3 114.6 638.6 120.4 645.2 124.8 C651.8 129.1 659.1 132.8 666.1 135.2 C673.1 137.7 680.8 139.5 687.1 139.4 C693.3 139.3 701.0 135.6 703.8 134.8" fill="none" stroke="#a3c5f7" stroke-width="2.600" stroke-linecap="round"/>
<path d="M515.4 1.3 C515.7 5.5 514.3 17.3 517.1 26.4 C519.9 35.5 522.7 45.6 532.2 55.7 C541.7 65.8 559.7 75.9 574.0 87.1 C588.3 98.3 608.9 113.6 618.0 122.7 C627.1 131.7 626.4 134.2 628.5 141.5 C630.5 148.8 630.5 156.1 630.5 166.6 C630.5 177.2 628.8 198.5 628.5 204.9" fill="none" stroke="#c9c8d0" stroke-width="1.300"/>
<path d="M703.8 15.9 C700.3 22.9 690.5 42.4 682.9 57.8 C675.2 73.1 665.1 90.6 657.8 108.0 C650.4 125.5 643.1 146.3 638.9 162.4 C634.7 178.6 633.7 197.8 632.6 204.9" fill="none" stroke="#c9c8d0" stroke-width="1.300"/>
<path d="M623.2 195.0 C622.3 205.5 618.5 236.9 618.0 257.8 C617.5 278.7 618.5 296.7 620.1 320.6 C621.7 344.5 626.2 387.7 627.4 401.2" fill="none" stroke="#c9c8d0" stroke-width="1.300"/>
<path d="M628.5 195.0 L626.4 257.8" fill="none" stroke="#c9c8d0" stroke-width="1.300"/>
<path d="M513.3 1.3 C513.0 6.5 509.5 23.3 511.2 32.7 C513.0 42.1 516.1 50.1 523.8 57.8 C531.5 65.5 547.2 72.4 557.3 78.7 C567.4 85.0 579.8 90.9 584.5 95.5 C589.2 100.0 585.4 104.2 585.5 105.9" fill="none" stroke="#a9a58c" stroke-width=".7" stroke-dasharray="2 1.500"/>
<path d="M19.0 0.0 L-25.8 335.2" fill="none" stroke="#fff" stroke-width="1.9" stroke-linecap="round" stroke-linejoin="round"/>
<path d="M54.5 0.0 L9.3 338.6" fill="none" stroke="#fff" stroke-width="1.9" stroke-linecap="round" stroke-linejoin="round"/>
<path d="M73.0 0.0 L19.4 401.0" fill="none" stroke="#fff" stroke-width="1.9" stroke-linecap="round" stroke-linejoin="round"/>
<path d="M90.0 0.0 L44.3 342.1" fill="none" stroke="#fff" stroke-width="1.9" stroke-linecap="round" stroke-linejoin="round"/>
<path d="M112.0 0.0 L66.0 344.2" fill="none" stroke="#fff" stroke-width="1.9" stroke-linecap="round" stroke-linejoin="round"/>
<path d="M136.0 0.0 L82.4 401.0" fill="none" stroke="#fff" stroke-width="1.9" stroke-linecap="round" stroke-linejoin="round"/>
<path d="M165.5 0.0 L111.9 401.0" fill="none" stroke="#fff" stroke-width="1.9" stroke-linecap="round" stroke-linejoin="round"/>
<path d="M187.5 0.0 L133.9 401.0" fill="none" stroke="#fff" stroke-width="1.9" stroke-linecap="round" stroke-linejoin="round"/>
<path d="M232.5 0.0 L178.9 401.0" fill="none" stroke="#fff" stroke-width="1.9" stroke-linecap="round" stroke-linejoin="round"/>
<path d="M259.6 0.0 L206.0 401.0" fill="none" stroke="#fff" stroke-width="1.9" stroke-linecap="round" stroke-linejoin="round"/>
<path d="M276.0 0.0 L231.9 330.0" fill="none" stroke="#fff" stroke-width="1.9" stroke-linecap="round" stroke-linejoin="round"/>
<path d="M301.5 0.0 L281.5 150.0" fill="none" stroke="#fff" stroke-width="1.9" stroke-linecap="round" stroke-linejoin="round"/>
<path d="M331.0 0.0 L317.6 100.0" fill="none" stroke="#fff" stroke-width="1.9" stroke-linecap="round" stroke-linejoin="round"/>
<path d="M345.4 0.0 L332.7 95.0" fill="none" stroke="#fff" stroke-width="1.9" stroke-linecap="round" stroke-linejoin="round"/>
<path d="M313.3 20.0 L300.0 120.0" fill="none" stroke="#fff" stroke-width="1.3" stroke-linecap="round" stroke-linejoin="round"/>
<path d="M360.0 0.0 L352.0 60.0" fill="none" stroke="#fff" stroke-width="1.3" stroke-linecap="round" stroke-linejoin="round"/>
<path d="M375.0 0.0 L369.0 45.0" fill="none" stroke="#fff" stroke-width="1.3" stroke-linecap="round" stroke-linejoin="round"/>
<path d="M91.6 70.0 L87.0 105.0" fill="none" stroke="#fff" stroke-width="1.2" stroke-linecap="round" stroke-linejoin="round"/>
<path d="M104.0 150.0 L93.3 230.0" fill="none" stroke="#fff" stroke-width="1.2" stroke-linecap="round" stroke-linejoin="round"/>
<path d="M146.0 30.0 L141.7 62.0" fill="none" stroke="#fff" stroke-width="1.2" stroke-linecap="round" stroke-linejoin="round"/>
<path d="M203.0 0.0 L195.0 60.0" fill="none" stroke="#fff" stroke-width="1.2" stroke-linecap="round" stroke-linejoin="round"/>
<path d="M231.3 110.0 L220.6 190.0" fill="none" stroke="#fff" stroke-width="1.2" stroke-linecap="round" stroke-linejoin="round"/>
<path d="M141.0 262.0 L135.9 300.0" fill="none" stroke="#fff" stroke-width="1.2" stroke-linecap="round" stroke-linejoin="round"/>
<path d="M109.9 300.0 L104.6 340.0" fill="none" stroke="#fff" stroke-width="1.2" stroke-linecap="round" stroke-linejoin="round"/>
<path d="M162.9 300.0 L157.6 340.0" fill="none" stroke="#fff" stroke-width="1.2" stroke-linecap="round" stroke-linejoin="round"/>
<path d="M205.9 300.0 L192.4 401.0" fill="none" stroke="#fff" stroke-width="1.2" stroke-linecap="round" stroke-linejoin="round"/>
<path d="M242.9 300.0 L229.4 401.0" fill="none" stroke="#fff" stroke-width="1.2" stroke-linecap="round" stroke-linejoin="round"/>
<path d="M-0.7 230.0 L-10.1 300.0" fill="none" stroke="#fff" stroke-width="1.2" stroke-linecap="round" stroke-linejoin="round"/>
<path d="M0.0 -7.5 L381.5 35.2" fill="none" stroke="#fff" stroke-width="1.9" stroke-linecap="round" stroke-linejoin="round"/>
<path d="M0.0 62.0 L336.1 99.6" fill="none" stroke="#fff" stroke-width="1.9" stroke-linecap="round" stroke-linejoin="round"/>
<path d="M0.0 106.0 L304.7 140.1" fill="none" stroke="#fff" stroke-width="1.9" stroke-linecap="round" stroke-linejoin="round"/>
<path d="M0.0 139.0 L288.8 171.3" fill="none" stroke="#fff" stroke-width="1.9" stroke-linecap="round" stroke-linejoin="round"/>
<path d="M0.0 188.0 L273.0 218.6" fill="none" stroke="#fff" stroke-width="1.9" stroke-linecap="round" stroke-linejoin="round"/>
<path d="M0.0 226.0 L266.9 255.9" fill="none" stroke="#fff" stroke-width="1.9" stroke-linecap="round" stroke-linejoin="round"/>
<path d="M0.0 256.0 L261.6 285.3" fill="none" stroke="#fff" stroke-width="1.9" stroke-linecap="round" stroke-linejoin="round"/>
<path d="M0.0 298.0 L255.3 326.6" fill="none" stroke="#fff" stroke-width="1.9" stroke-linecap="round" stroke-linejoin="round"/>
<path d="M0.0 369.0 L245.6 396.5" fill="none" stroke="#fff" stroke-width="1.9" stroke-linecap="round" stroke-linejoin="round"/>
<path d="M215.0 32.1 L400.0 52.8" fill="none" stroke="#fff" stroke-width="1.2" stroke-linecap="round" stroke-linejoin="round"/>
<path d="M225.0 69.2 L330.0 81.0" fill="none" stroke="#fff" stroke-width="1.2" stroke-linecap="round" stroke-linejoin="round"/>
<path d="M225.0 105.2 L300.0 113.6" fill="none" stroke="#fff" stroke-width="1.2" stroke-linecap="round" stroke-linejoin="round"/>
<path d="M215.0 146.1 L290.0 154.5" fill="none" stroke="#fff" stroke-width="1.2" stroke-linecap="round" stroke-linejoin="round"/>
<path d="M100.0 161.2 L160.0 167.9" fill="none" stroke="#fff" stroke-width="1.2" stroke-linecap="round" stroke-linejoin="round"/>
<path d="M0.0 205.0 L215.0 229.1" fill="none" stroke="#fff" stroke-width="1.2" stroke-linecap="round" stroke-linejoin="round"/>
<path d="M110.0 252.3 L190.0 261.3" fill="none" stroke="#fff" stroke-width="1.2" stroke-linecap="round" stroke-linejoin="round"/>
<path d="M60.0 282.7 L215.0 300.1" fill="none" stroke="#fff" stroke-width="1.2" stroke-linecap="round" stroke-linejoin="round"/>
<path d="M60.0 326.7 L215.0 344.1" fill="none" stroke="#fff" stroke-width="1.2" stroke-linecap="round" stroke-linejoin="round"/>
<path d="M215.0 307.1 L255.0 311.6" fill="none" stroke="#fff" stroke-width="1.2" stroke-linecap="round" stroke-linejoin="round"/>
<path d="M215.0 336.1 L255.0 340.6" fill="none" stroke="#fff" stroke-width="1.2" stroke-linecap="round" stroke-linejoin="round"/>
<path d="M20.0 387.2 L240.0 411.9" fill="none" stroke="#fff" stroke-width="1.2" stroke-linecap="round" stroke-linejoin="round"/>
<path d="M60.0 358.7 L180.0 372.2" fill="none" stroke="#fff" stroke-width="1.2" stroke-linecap="round" stroke-linejoin="round"/>
<path d="M60.0 51.7 L110.0 57.3" fill="none" stroke="#fff" stroke-width="1.2" stroke-linecap="round" stroke-linejoin="round"/>
<path d="M120.0 98.4 L180.0 105.2" fill="none" stroke="#fff" stroke-width="1.2" stroke-linecap="round" stroke-linejoin="round"/>
<path d="M178.0 309.1 L203.1 278.7 L251.2 221.2 L268.0 201.3" fill="none" stroke="#fff" stroke-width="1.5" stroke-linecap="round" stroke-linejoin="round"/>
<path d="M67.1 401.2 L115.2 372.9 L144.5 360.3" fill="none" stroke="#fff" stroke-width="1.7" stroke-linecap="round" stroke-linejoin="round"/>
<path d="M40.9 0.2 L13.7 204.9 L0.1 295.5" fill="none" stroke="#fff" stroke-width="3.8" stroke-linecap="round" stroke-linejoin="round"/>
<path d="M217.8 0.2 L190.5 204.9 L163.3 401.2" fill="none" stroke="#fff" stroke-width="5.5" stroke-linecap="round" stroke-linejoin="round"/>
<path d="M0.1 25.6 L142.4 42.1 L358.0 67.2 L440.1 83.9" fill="none" stroke="#fff" stroke-width="6.5" stroke-linecap="round" stroke-linejoin="round"/>
<path d="M440.1 83.9 L456.8 103.8 L481.9 149.9 L507.1 204.9 L517.5 220.1" fill="none" stroke="#fff" stroke-width="6.5" stroke-linecap="round" stroke-linejoin="round"/>
<path d="M454.7 1.3 L456.8 18.0 L477.8 22.2 L498.7 29.5 L515.4 42.1 L521.7 57.8" fill="none" stroke="#fff" stroke-width="5.5" stroke-linecap="round" stroke-linejoin="round"/>
<path d="M521.7 57.8 L525.9 89.2 L534.3 128.9 L542.6 147.8" fill="none" stroke="#fff" stroke-width="2.5" stroke-linecap="round" stroke-linejoin="round"/>
<path d="M542.6 147.8 L548.9 158.2 L571.9 172.9" fill="none" stroke="#fff" stroke-width="6" stroke-linecap="round" stroke-linejoin="round"/>
<path d="M468.3 257.8 L473.6 282.9 L465.2 341.5 L457.9 387.5" fill="none" stroke="#fff" stroke-width="5.5" stroke-linecap="round" stroke-linejoin="round"/>
<path d="M471.5 255.7 L515.4 262.0" fill="none" stroke="#fff" stroke-width="2" stroke-linecap="round" stroke-linejoin="round"/>
<path d="M389.9 9.7 L452.6 14.9" fill="none" stroke="#fff" stroke-width="1.8" stroke-linecap="round" stroke-linejoin="round"/>
<path d="M400.3 22.2 L410.8 82.9" fill="none" stroke="#fff" stroke-width="1.8" stroke-linecap="round" stroke-linejoin="round"/>
<path d="M410.8 18.0 L412.9 57.8" fill="none" stroke="#fff" stroke-width="1.8" stroke-linecap="round" stroke-linejoin="round"/>
<path d="M431.7 15.9 L435.9 87.1" fill="none" stroke="#fff" stroke-width="1.8" stroke-linecap="round" stroke-linejoin="round"/>
<path d="M440.1 26.4 L440.1 57.8" fill="none" stroke="#fff" stroke-width="1.8" stroke-linecap="round" stroke-linejoin="round"/>
<path d="M410.8 57.8 L440.1 59.9" fill="none" stroke="#fff" stroke-width="1.8" stroke-linecap="round" stroke-linejoin="round"/>
<path d="M452.6 18.0 L446.4 82.9" fill="none" stroke="#fff" stroke-width="1.8" stroke-linecap="round" stroke-linejoin="round"/>
<path d="M471.5 22.2 L463.1 85.0" fill="none" stroke="#fff" stroke-width="1.8" stroke-linecap="round" stroke-linejoin="round"/>
<path d="M490.3 30.6 L481.9 87.1" fill="none" stroke="#fff" stroke-width="1.8" stroke-linecap="round" stroke-linejoin="round"/>
<path d="M502.9 36.9 L502.9 66.2" fill="none" stroke="#fff" stroke-width="1.8" stroke-linecap="round" stroke-linejoin="round"/>
<path d="M400.3 55.7 L444.3 57.8" fill="none" stroke="#fff" stroke-width="1.8" stroke-linecap="round" stroke-linejoin="round"/>
<path d="M348.0 87.1 L354.3 116.4" fill="none" stroke="#fff" stroke-width="1.8" stroke-linecap="round" stroke-linejoin="round"/>
<path d="M366.8 87.1 L368.9 141.5" fill="none" stroke="#fff" stroke-width="1.8" stroke-linecap="round" stroke-linejoin="round"/>
<path d="M385.7 89.2 L381.5 128.9" fill="none" stroke="#fff" stroke-width="1.8" stroke-linecap="round" stroke-linejoin="round"/>
<path d="M402.4 91.3 L396.1 141.5" fill="none" stroke="#fff" stroke-width="1.8" stroke-linecap="round" stroke-linejoin="round"/>
<path d="M419.2 93.4 L415.0 120.6" fill="none" stroke="#fff" stroke-width="1.8" stroke-linecap="round" stroke-linejoin="round"/>
<path d="M433.8 95.5 L431.7 112.2" fill="none" stroke="#fff" stroke-width="1.8" stroke-linecap="round" stroke-linejoin="round"/>
<path d="M348.0 87.1 L433.8 95.5" fill="none" stroke="#fff" stroke-width="1.8" stroke-linecap="round" stroke-linejoin="round"/>
<path d="M381.5 141.5 L448.5 109.1" fill="none" stroke="#fff" stroke-width="1.8" stroke-linecap="round" stroke-linejoin="round"/>
<path d="M389.9 131.0 L417.1 179.2" fill="none" stroke="#fff" stroke-width="1.8" stroke-linecap="round" stroke-linejoin="round"/>
<path d="M417.1 133.1 L456.8 177.1" fill="none" stroke="#fff" stroke-width="1.8" stroke-linecap="round" stroke-linejoin="round"/>
<path d="M410.8 128.9 L425.4 128.9" fill="none" stroke="#fff" stroke-width="1.8" stroke-linecap="round" stroke-linejoin="round"/>
<path d="M427.5 131.0 L452.6 175.0" fill="none" stroke="#fff" stroke-width="1.8" stroke-linecap="round" stroke-linejoin="round"/>
<path d="M469.4 97.6 L519.6 70.3" fill="none" stroke="#fff" stroke-width="1.8" stroke-linecap="round" stroke-linejoin="round"/>
<path d="M473.6 108.0 L515.4 87.1" fill="none" stroke="#fff" stroke-width="1.8" stroke-linecap="round" stroke-linejoin="round"/>
<path d="M469.4 120.6 L517.5 99.6 L511.2 74.5" fill="none" stroke="#fff" stroke-width="1.8" stroke-linecap="round" stroke-linejoin="round"/>
<path d="M473.6 131.0 L528.0 110.1" fill="none" stroke="#fff" stroke-width="1.8" stroke-linecap="round" stroke-linejoin="round"/>
<path d="M481.9 141.5 L536.4 120.6" fill="none" stroke="#fff" stroke-width="1.8" stroke-linecap="round" stroke-linejoin="round"/>
<path d="M469.4 97.6 L494.5 145.7" fill="none" stroke="#fff" stroke-width="1.8" stroke-linecap="round" stroke-linejoin="round"/>
<path d="M502.9 78.7 L521.7 120.6" fill="none" stroke="#fff" stroke-width="1.8" stroke-linecap="round" stroke-linejoin="round"/>
<path d="M456.8 139.4 L465.2 143.6 L473.6 137.3" fill="none" stroke="#fff" stroke-width="1.8" stroke-linecap="round" stroke-linejoin="round"/>
<path d="M417.1 164.5 L448.5 154.1 L477.8 141.5" fill="none" stroke="#fff" stroke-width="1.8" stroke-linecap="round" stroke-linejoin="round"/>
<path d="M448.5 168.7 L456.8 177.1 L502.9 158.2" fill="none" stroke="#fff" stroke-width="1.8" stroke-linecap="round" stroke-linejoin="round"/>
<path d="M398.2 191.7 L481.9 154.1" fill="none" stroke="#fff" stroke-width="1.8" stroke-linecap="round" stroke-linejoin="round"/>
<path d="M419.2 198.0 L494.5 168.7" fill="none" stroke="#fff" stroke-width="1.8" stroke-linecap="round" stroke-linejoin="round"/>
<path d="M435.9 177.1 L456.8 204.9" fill="none" stroke="#fff" stroke-width="1.8" stroke-linecap="round" stroke-linejoin="round"/>
<path d="M511.2 204.9 L542.6 160.3" fill="none" stroke="#fff" stroke-width="1.8" stroke-linecap="round" stroke-linejoin="round"/>
<path d="M553.1 149.9 L588.7 108.0 L613.8 128.9" fill="none" stroke="#fff" stroke-width="1.8" stroke-linecap="round" stroke-linejoin="round"/>
<path d="M542.6 99.6 L557.3 124.8" fill="none" stroke="#fff" stroke-width="1.8" stroke-linecap="round" stroke-linejoin="round"/>
<path d="M557.3 95.5 L569.9 120.6" fill="none" stroke="#fff" stroke-width="1.8" stroke-linecap="round" stroke-linejoin="round"/>
<path d="M536.4 74.5 L548.9 70.3 L557.3 82.9" fill="none" stroke="#fff" stroke-width="1.8" stroke-linecap="round" stroke-linejoin="round"/>
<path d="M557.3 24.3 L645.2 33.7" fill="none" stroke="#fff" stroke-width="1.8" stroke-linecap="round" stroke-linejoin="round"/>
<path d="M584.5 1.3 L580.3 64.1" fill="none" stroke="#fff" stroke-width="1.8" stroke-linecap="round" stroke-linejoin="round"/>
<path d="M563.6 1.3 L557.3 22.2" fill="none" stroke="#fff" stroke-width="1.8" stroke-linecap="round" stroke-linejoin="round"/>
<path d="M590.8 47.3 L703.8 57.8" fill="none" stroke="#fff" stroke-width="1.8" stroke-linecap="round" stroke-linejoin="round"/>
<path d="M657.8 7.6 L703.8 13.8" fill="none" stroke="#fff" stroke-width="1.8" stroke-linecap="round" stroke-linejoin="round"/>
<path d="M657.8 36.9 L703.8 45.2" fill="none" stroke="#fff" stroke-width="1.8" stroke-linecap="round" stroke-linejoin="round"/>
<path d="M657.8 70.3 L703.8 78.7" fill="none" stroke="#fff" stroke-width="1.8" stroke-linecap="round" stroke-linejoin="round"/>
<path d="M645.2 101.7 L703.8 110.1" fill="none" stroke="#fff" stroke-width="1.8" stroke-linecap="round" stroke-linejoin="round"/>
<path d="M645.2 101.7 L649.4 124.8 L703.8 137.3" fill="none" stroke="#fff" stroke-width="1.8" stroke-linecap="round" stroke-linejoin="round"/>
<path d="M672.4 1.3 L674.5 15.9" fill="none" stroke="#fff" stroke-width="1.8" stroke-linecap="round" stroke-linejoin="round"/>
<path d="M693.3 1.3 L691.2 13.8" fill="none" stroke="#fff" stroke-width="1.8" stroke-linecap="round" stroke-linejoin="round"/>
<path d="M613.8 74.5 L641.0 87.1" fill="none" stroke="#fff" stroke-width="1.8" stroke-linecap="round" stroke-linejoin="round"/>
<path d="M641.0 189.6 L703.8 168.7" fill="none" stroke="#fff" stroke-width="1.8" stroke-linecap="round" stroke-linejoin="round"/>
<path d="M645.2 204.9 L703.8 183.4" fill="none" stroke="#fff" stroke-width="1.8" stroke-linecap="round" stroke-linejoin="round"/>
<path d="M657.8 179.2 L661.9 195.9" fill="none" stroke="#fff" stroke-width="1.8" stroke-linecap="round" stroke-linejoin="round"/>
<path d="M674.5 172.9 L680.8 191.7" fill="none" stroke="#fff" stroke-width="1.8" stroke-linecap="round" stroke-linejoin="round"/>
<path d="M578.2 191.7 L590.8 204.9" fill="none" stroke="#fff" stroke-width="1.8" stroke-linecap="round" stroke-linejoin="round"/>
<path d="M588.7 183.4 L605.4 193.8" fill="none" stroke="#fff" stroke-width="1.8" stroke-linecap="round" stroke-linejoin="round"/>
<path d="M369.1 239.8 L396.1 287.1" fill="none" stroke="#fff" stroke-width="1.8" stroke-linecap="round" stroke-linejoin="round"/>
<path d="M376.3 234.1 L442.2 203.4" fill="none" stroke="#fff" stroke-width="1.8" stroke-linecap="round" stroke-linejoin="round"/>
<path d="M348.0 276.6 L465.2 218.0 L507.1 201.3" fill="none" stroke="#fff" stroke-width="1.8" stroke-linecap="round" stroke-linejoin="round"/>
<path d="M421.3 215.9 L435.9 243.1" fill="none" stroke="#fff" stroke-width="1.8" stroke-linecap="round" stroke-linejoin="round"/>
<path d="M446.4 199.2 L465.2 232.7 L471.5 255.7" fill="none" stroke="#fff" stroke-width="1.8" stroke-linecap="round" stroke-linejoin="round"/>
<path d="M477.8 207.6 L498.7 207.6 L498.7 220.1 L481.9 222.2" fill="none" stroke="#fff" stroke-width="1.8" stroke-linecap="round" stroke-linejoin="round"/>
<path d="M348.0 287.1 L360.6 308.0" fill="none" stroke="#fff" stroke-width="1.8" stroke-linecap="round" stroke-linejoin="round"/>
<path d="M398.2 295.5 L387.8 401.2" fill="none" stroke="#fff" stroke-width="1.8" stroke-linecap="round" stroke-linejoin="round"/>
<path d="M348.0 320.6 L400.3 293.4" fill="none" stroke="#fff" stroke-width="1.8" stroke-linecap="round" stroke-linejoin="round"/>
<path d="M404.5 308.0 L465.2 282.9" fill="none" stroke="#fff" stroke-width="1.8" stroke-linecap="round" stroke-linejoin="round"/>
<path d="M400.3 324.8 L465.2 293.4" fill="none" stroke="#fff" stroke-width="1.8" stroke-linecap="round" stroke-linejoin="round"/>
<path d="M431.7 308.0 L444.3 328.9 L440.1 401.2" fill="none" stroke="#fff" stroke-width="1.8" stroke-linecap="round" stroke-linejoin="round"/>
<path d="M396.1 341.5 L461.0 347.8" fill="none" stroke="#fff" stroke-width="1.8" stroke-linecap="round" stroke-linejoin="round"/>
<path d="M471.5 324.8 L599.2 339.4 L703.8 356.2" fill="none" stroke="#fff" stroke-width="1.8" stroke-linecap="round" stroke-linejoin="round"/>
<path d="M507.1 266.2 L502.9 383.4" fill="none" stroke="#fff" stroke-width="1.8" stroke-linecap="round" stroke-linejoin="round"/>
<path d="M473.6 364.5 L595.0 377.1" fill="none" stroke="#fff" stroke-width="1.8" stroke-linecap="round" stroke-linejoin="round"/>
<path d="M412.9 349.9 L410.8 387.5" fill="none" stroke="#fff" stroke-width="1.8" stroke-linecap="round" stroke-linejoin="round"/>
<path d="M492.4 335.2 L515.4 337.3" fill="none" stroke="#fff" stroke-width="1.8" stroke-linecap="round" stroke-linejoin="round"/>
<path d="M523.8 349.9 L530.1 352.0 L528.0 366.6" fill="none" stroke="#fff" stroke-width="1.8" stroke-linecap="round" stroke-linejoin="round"/>
<path d="M544.7 354.1 L553.1 356.2 L551.0 368.7" fill="none" stroke="#fff" stroke-width="1.8" stroke-linecap="round" stroke-linejoin="round"/>
<path d="M563.6 356.2 L571.9 358.2 L569.9 370.8" fill="none" stroke="#fff" stroke-width="1.8" stroke-linecap="round" stroke-linejoin="round"/>
<path d="M486.1 264.1 L515.4 257.8 L523.8 262.4" fill="none" stroke="#fff" stroke-width="1.8" stroke-linecap="round" stroke-linejoin="round"/>
<path d="M492.4 266.2 L496.6 272.4" fill="none" stroke="#fff" stroke-width="1.8" stroke-linecap="round" stroke-linejoin="round"/>
<path d="M517.5 257.8 L578.2 232.7 L605.4 268.3" fill="none" stroke="#fff" stroke-width="1.8" stroke-linecap="round" stroke-linejoin="round"/>
<path d="M511.2 249.4 L521.7 251.5" fill="none" stroke="#fff" stroke-width="1.8" stroke-linecap="round" stroke-linejoin="round"/>
<path d="M515.4 234.8 L519.6 257.8" fill="none" stroke="#fff" stroke-width="1.8" stroke-linecap="round" stroke-linejoin="round"/>
<path d="M618.0 274.5 L703.8 289.2" fill="none" stroke="#fff" stroke-width="1.8" stroke-linecap="round" stroke-linejoin="round"/>
<path d="M618.0 232.7 L703.8 243.1" fill="none" stroke="#fff" stroke-width="1.8" stroke-linecap="round" stroke-linejoin="round"/>
<path d="M636.8 195.0 L628.5 320.6" fill="none" stroke="#fff" stroke-width="1.8" stroke-linecap="round" stroke-linejoin="round"/>
<path d="M649.4 197.1 L641.0 299.6" fill="none" stroke="#fff" stroke-width="1.8" stroke-linecap="round" stroke-linejoin="round"/>
<path d="M666.1 195.0 L661.9 278.7" fill="none" stroke="#fff" stroke-width="1.8" stroke-linecap="round" stroke-linejoin="round"/>
<path d="M682.9 215.9 L680.8 282.9" fill="none" stroke="#fff" stroke-width="1.8" stroke-linecap="round" stroke-linejoin="round"/>
<path d="M618.0 251.5 L703.8 264.1" fill="none" stroke="#fff" stroke-width="1.8" stroke-linecap="round" stroke-linejoin="round"/>
<path d="M605.4 320.6 L703.8 333.1" fill="none" stroke="#fff" stroke-width="1.8" stroke-linecap="round" stroke-linejoin="round"/>
<path d="M601.2 358.2 L703.8 370.8" fill="none" stroke="#fff" stroke-width="1.8" stroke-linecap="round" stroke-linejoin="round"/>
<path d="M599.2 375.0 L666.1 383.4" fill="none" stroke="#fff" stroke-width="1.8" stroke-linecap="round" stroke-linejoin="round"/>
<path d="M628.5 341.5 L624.3 387.5" fill="none" stroke="#fff" stroke-width="1.8" stroke-linecap="round" stroke-linejoin="round"/>
<path d="M645.2 343.6 L643.1 387.5" fill="none" stroke="#fff" stroke-width="1.8" stroke-linecap="round" stroke-linejoin="round"/>
<path d="M661.9 312.2 L655.7 387.5" fill="none" stroke="#fff" stroke-width="1.8" stroke-linecap="round" stroke-linejoin="round"/>
<path d="M636.8 215.9 L703.8 199.2" fill="none" stroke="#fff" stroke-width="1.8" stroke-linecap="round" stroke-linejoin="round"/>
<path d="M670.3 224.3 L703.8 215.9" fill="none" stroke="#fff" stroke-width="1.8" stroke-linecap="round" stroke-linejoin="round"/>
<path d="M609.6 368.7 L611.7 383.4" fill="none" stroke="#fff" stroke-width="1.8" stroke-linecap="round" stroke-linejoin="round"/>
<path d="M268.0 265.1 L318.2 271.4 L358.0 275.6" fill="none" stroke="#fff" stroke-width="1.8" stroke-linecap="round" stroke-linejoin="round"/>
<path d="M262.8 288.1 L311.9 293.8 L358.0 299.6" fill="none" stroke="#fff" stroke-width="1.8" stroke-linecap="round" stroke-linejoin="round"/>
<path d="M259.6 313.3 L307.8 319.5" fill="none" stroke="#fff" stroke-width="1.8" stroke-linecap="round" stroke-linejoin="round"/>
<path d="M317.2 270.8 L309.8 341.5" fill="none" stroke="#fff" stroke-width="1.8" stroke-linecap="round" stroke-linejoin="round"/>
<path d="M341.2 264.1 L332.9 331.0" fill="none" stroke="#fff" stroke-width="1.8" stroke-linecap="round" stroke-linejoin="round"/>
<path d="M291.0 268.3 L286.8 320.6" fill="none" stroke="#fff" stroke-width="1.8" stroke-linecap="round" stroke-linejoin="round"/>
<path d="M320.3 292.3 L353.8 288.1" fill="none" stroke="#fff" stroke-width="1.8" stroke-linecap="round" stroke-linejoin="round"/>
<path d="M332.9 295.5 L335.0 308.0 L353.8 308.0" fill="none" stroke="#fff" stroke-width="1.8" stroke-linecap="round" stroke-linejoin="round"/>
<path d="M324.5 303.8 L358.0 318.5" fill="none" stroke="#fff" stroke-width="1.8" stroke-linecap="round" stroke-linejoin="round"/>
<path d="M257.5 333.1 L299.4 339.4" fill="none" stroke="#fff" stroke-width="1.8" stroke-linecap="round" stroke-linejoin="round"/>
<path d="M378.8 143.3 L459.3 104.7" fill="none" stroke="#fff" stroke-width="1.8" stroke-linecap="round" stroke-linejoin="round"/>
<path d="M398.2 191.5 L459.3 162.6" fill="none" stroke="#fff" stroke-width="1.8" stroke-linecap="round" stroke-linejoin="round"/>
<path d="M401.4 133.6 L415.8 165.8 L443.2 152.9" fill="none" stroke="#fff" stroke-width="1.8" stroke-linecap="round" stroke-linejoin="round"/>
<path d="M417.5 135.2 L427.1 152.9" fill="none" stroke="#fff" stroke-width="1.8" stroke-linecap="round" stroke-linejoin="round"/>
<path d="M419.1 197.9 L446.4 185.1" fill="none" stroke="#fff" stroke-width="1.8" stroke-linecap="round" stroke-linejoin="round"/>
<path d="M422.3 217.2 L427.1 228.5 L446.4 220.5" fill="none" stroke="#fff" stroke-width="1.8" stroke-linecap="round" stroke-linejoin="round"/>
<path d="M378.8 236.5 L459.3 197.9" fill="none" stroke="#fff" stroke-width="1.8" stroke-linecap="round" stroke-linejoin="round"/>
<path d="M356.3 207.6 L333.8 294.9" fill="none" stroke="#fff" stroke-width="1.8" stroke-linecap="round" stroke-linejoin="round"/>
<path d="M369.2 239.8 L375.6 249.4" fill="none" stroke="#fff" stroke-width="1.8" stroke-linecap="round" stroke-linejoin="round"/>
<path d="M314.5 269.5 L316.1 294.9" fill="none" stroke="#fff" stroke-width="1.8" stroke-linecap="round" stroke-linejoin="round"/>
<path d="M340.2 280.0 L394.9 252.6" fill="none" stroke="#fff" stroke-width="1.8" stroke-linecap="round" stroke-linejoin="round"/>
<path d="M312.9 143.3 L327.4 169.8" fill="none" stroke="#fff" stroke-width="1.8" stroke-linecap="round" stroke-linejoin="round"/>
<path d="M272.7 217.2 L288.8 214.0 L293.6 210.8 L306.5 214.8" fill="none" stroke="#fff" stroke-width="1.8" stroke-linecap="round" stroke-linejoin="round"/>
<path d="M333.8 106.3 L353.1 104.7 L351.5 119.1" fill="none" stroke="#fff" stroke-width="1.8" stroke-linecap="round" stroke-linejoin="round"/>
<path d="M337.0 104.7 L335.4 127.2" fill="none" stroke="#fff" stroke-width="1.8" stroke-linecap="round" stroke-linejoin="round"/>
<path d="M362.8 115.9 L367.6 127.2" fill="none" stroke="#fff" stroke-width="1.8" stroke-linecap="round" stroke-linejoin="round"/>
<path d="M218.0 159.3 L285.6 165.8" fill="none" stroke="#fff" stroke-width="1.8" stroke-linecap="round" stroke-linejoin="round"/>
<path d="M218.0 185.1 L271.1 191.5" fill="none" stroke="#fff" stroke-width="1.8" stroke-linecap="round" stroke-linejoin="round"/>
<path d="M218.0 207.6 L266.3 214.0" fill="none" stroke="#fff" stroke-width="1.8" stroke-linecap="round" stroke-linejoin="round"/>
<path d="M218.0 233.3 L261.4 236.5" fill="none" stroke="#fff" stroke-width="1.8" stroke-linecap="round" stroke-linejoin="round"/>
<path d="M230.9 255.8 L230.9 294.9" fill="none" stroke="#fff" stroke-width="1.8" stroke-linecap="round" stroke-linejoin="round"/>
<path d="M218.0 271.9 L259.8 275.2" fill="none" stroke="#fff" stroke-width="1.8" stroke-linecap="round" stroke-linejoin="round"/>
<path d="M242.1 236.5 L242.1 294.9" fill="none" stroke="#fff" stroke-width="1.8" stroke-linecap="round" stroke-linejoin="round"/>
<path d="M217.8 0.2 L190.5 204.9 L163.3 401.2" fill="none" stroke="#d7d7e2" stroke-width=".8"/>
<path d="M40.9 0.2 L13.7 204.9 L0.1 295.5" fill="none" stroke="#d7d7e2" stroke-width=".8"/>
<path d="M404.5 1.3 C401.7 5.1 393.7 16.3 387.8 24.3 C381.8 32.3 376.8 37.6 368.9 49.4 C361.0 61.2 346.6 84.7 340.2 95.0 C333.9 105.3 334.9 104.4 330.6 111.1 C326.3 117.8 320.4 127.2 314.5 135.2 C308.6 143.3 300.8 152.1 295.2 159.3 C289.6 166.6 284.5 172.7 280.7 178.6 C277.0 184.5 274.8 188.3 272.7 194.7 C270.5 201.2 269.2 209.7 267.9 217.2 C266.5 224.8 265.7 230.6 264.6 239.8 C263.6 248.9 262.5 262.7 261.4 271.9 C260.4 281.1 261.0 273.4 258.2 294.9 C255.5 316.5 247.2 383.5 245.0 401.2" fill="none" stroke="#ecc977" stroke-width="5.0" stroke-linecap="round" stroke-linejoin="round"/>
<path d="M-2.0 337.3 L60.8 344.6 L165.4 354.5 L259.6 362.4 L358.0 372.9 L410.8 384.4 L456.8 388.6 L515.4 395.9" fill="none" stroke="#ecc977" stroke-width="5.5" stroke-linecap="round" stroke-linejoin="round"/>
<path d="M-2.0 341.5 L60.8 349.2 L165.4 360.3 L259.6 370.4 L358.0 382.9 L410.8 393.8 L452.6 401.2" fill="none" stroke="#ecc977" stroke-width="5.5" stroke-linecap="round" stroke-linejoin="round"/>
<path d="M62.9 344.6 L57.6 401.2" fill="none" stroke="#ecc977" stroke-width="5.7" stroke-linecap="round" stroke-linejoin="round"/>
<path d="M335.0 328.9 L332.9 354.1 L329.7 379.2" fill="none" stroke="#ecc977" stroke-width="5.2" stroke-linecap="round" stroke-linejoin="round"/>
<path d="M263.8 362.4 C279.5 354.2 335.9 324.9 358.0 313.3 C380.0 301.6 376.9 302.4 396.1 292.3 C415.4 282.2 450.2 264.9 473.6 252.6 C496.9 240.2 522.4 225.7 536.4 218.0 C550.3 210.3 546.8 217.2 557.3 206.5 C567.8 195.9 589.0 166.3 599.2 154.1 C609.3 141.8 611.4 142.2 618.0 133.1 C624.6 124.1 633.9 110.5 638.9 99.6 C644.0 88.8 646.2 82.2 648.3 68.3 C650.4 54.3 650.8 27.1 651.5 15.9 C652.2 4.8 652.3 3.7 652.5 1.3" fill="none" stroke="#ecc977" stroke-width="6.2" stroke-linecap="round" stroke-linejoin="round"/>
<path d="M605.4 1.3 L651.5 6.5 L703.8 11.3" fill="none" stroke="#ecc977" stroke-width="5.7" stroke-linecap="round" stroke-linejoin="round"/>
<path d="M557.3 206.5 L578.2 198.8 L618.0 195.0" fill="none" stroke="#ecc977" stroke-width="5.7" stroke-linecap="round" stroke-linejoin="round"/>
<path d="M618.0 133.1 C619.2 138.0 624.3 150.5 625.3 162.4 C626.4 174.4 626.2 192.5 624.3 204.9 C622.3 217.3 616.2 224.6 613.8 236.9 C611.4 249.2 612.8 251.3 609.6 278.7 C606.5 306.1 597.4 380.7 595.0 401.2" fill="none" stroke="#ecc977" stroke-width="6.4" stroke-linecap="round" stroke-linejoin="round"/>
<path d="M628.5 183.4 L636.8 177.1 L703.8 154.1" fill="none" stroke="#ecc977" stroke-width="5.8" stroke-linecap="round" stroke-linejoin="round"/>
<path d="M599.2 204.9 L615.9 191.7 L628.5 183.4" fill="none" stroke="#ecc977" stroke-width="5.7" stroke-linecap="round" stroke-linejoin="round"/>
<path d="M404.5 1.3 C401.7 5.1 393.7 16.3 387.8 24.3 C381.8 32.3 376.8 37.6 368.9 49.4 C361.0 61.2 346.6 84.7 340.2 95.0 C333.9 105.3 334.9 104.4 330.6 111.1 C326.3 117.8 320.4 127.2 314.5 135.2 C308.6 143.3 300.8 152.1 295.2 159.3 C289.6 166.6 284.5 172.7 280.7 178.6 C277.0 184.5 274.8 188.3 272.7 194.7 C270.5 201.2 269.2 209.7 267.9 217.2 C266.5 224.8 265.7 230.6 264.6 239.8 C263.6 248.9 262.5 262.7 261.4 271.9 C260.4 281.1 261.0 273.4 258.2 294.9 C255.5 316.5 247.2 383.5 245.0 401.2" fill="none" stroke="#fbe09a" stroke-width="3.8" stroke-linecap="round" stroke-linejoin="round"/>
<path d="M-2.0 337.3 L60.8 344.6 L165.4 354.5 L259.6 362.4 L358.0 372.9 L410.8 384.4 L456.8 388.6 L515.4 395.9" fill="none" stroke="#fbe09a" stroke-width="4.3" stroke-linecap="round" stroke-linejoin="round"/>
<path d="M-2.0 341.5 L60.8 349.2 L165.4 360.3 L259.6 370.4 L358.0 382.9 L410.8 393.8 L452.6 401.2" fill="none" stroke="#fbe09a" stroke-width="4.3" stroke-linecap="round" stroke-linejoin="round"/>
<path d="M62.9 344.6 L57.6 401.2" fill="none" stroke="#fbe09a" stroke-width="4.5" stroke-linecap="round" stroke-linejoin="round"/>
<path d="M335.0 328.9 L332.9 354.1 L329.7 379.2" fill="none" stroke="#fbe09a" stroke-width="4" stroke-linecap="round" stroke-linejoin="round"/>
<path d="M263.8 362.4 C279.5 354.2 335.9 324.9 358.0 313.3 C380.0 301.6 376.9 302.4 396.1 292.3 C415.4 282.2 450.2 264.9 473.6 252.6 C496.9 240.2 522.4 225.7 536.4 218.0 C550.3 210.3 546.8 217.2 557.3 206.5 C567.8 195.9 589.0 166.3 599.2 154.1 C609.3 141.8 611.4 142.2 618.0 133.1 C624.6 124.1 633.9 110.5 638.9 99.6 C644.0 88.8 646.2 82.2 648.3 68.3 C650.4 54.3 650.8 27.1 651.5 15.9 C652.2 4.8 652.3 3.7 652.5 1.3" fill="none" stroke="#fbe09a" stroke-width="5" stroke-linecap="round" stroke-linejoin="round"/>
<path d="M605.4 1.3 L651.5 6.5 L703.8 11.3" fill="none" stroke="#fbe09a" stroke-width="4.5" stroke-linecap="round" stroke-linejoin="round"/>
<path d="M557.3 206.5 L578.2 198.8 L618.0 195.0" fill="none" stroke="#fbe09a" stroke-width="4.5" stroke-linecap="round" stroke-linejoin="round"/>
<path d="M618.0 133.1 C619.2 138.0 624.3 150.5 625.3 162.4 C626.4 174.4 626.2 192.5 624.3 204.9 C622.3 217.3 616.2 224.6 613.8 236.9 C611.4 249.2 612.8 251.3 609.6 278.7 C606.5 306.1 597.4 380.7 595.0 401.2" fill="none" stroke="#fbe09a" stroke-width="5.2" stroke-linecap="round" stroke-linejoin="round"/>
<path d="M628.5 183.4 L636.8 177.1 L703.8 154.1" fill="none" stroke="#fbe09a" stroke-width="4.6" stroke-linecap="round" stroke-linejoin="round"/>
<path d="M599.2 204.9 L615.9 191.7 L628.5 183.4" fill="none" stroke="#fbe09a" stroke-width="4.5" stroke-linecap="round" stroke-linejoin="round"/>
<circle cx="612.8" cy="172.9" r="6" fill="#c9e0a2" stroke="#fbe09a" stroke-width="4"/>
<rect x="232.4" y="379.2" width="30" height="20" fill="#f3dcc0" opacity=".7"/>
<text x="184.3" y="12.8" transform="rotate(8 184.3 12.8)" font-size="11.7" fill="#6e6e6e" text-anchor="middle" dominant-baseline="central" stroke="#fff" stroke-width="2.500" stroke-linejoin="round" paint-order="stroke" >Mary St</text>
<text x="115.2" y="41.5" transform="rotate(7 115.2 41.5)" font-size="11.7" fill="#6e6e6e" text-anchor="middle" dominant-baseline="central" stroke="#fff" stroke-width="2.500" stroke-linejoin="round" paint-order="stroke" >Pigdon St</text>
<text x="64.6" y="80.8" transform="rotate(-82 64.6 80.8)" font-size="11.7" fill="#6e6e6e" text-anchor="middle" dominant-baseline="central" stroke="#fff" stroke-width="2.500" stroke-linejoin="round" paint-order="stroke" >Drummond St</text>
<text x="99.5" y="85.0" transform="rotate(-82 99.5 85.0)" font-size="11.7" fill="#6e6e6e" text-anchor="middle" dominant-baseline="central" stroke="#fff" stroke-width="2.500" stroke-linejoin="round" paint-order="stroke" >Rathdowne St</text>
<text x="128.8" y="77.7" transform="rotate(-82 128.8 77.7)" font-size="11.7" fill="#6e6e6e" text-anchor="middle" dominant-baseline="central" stroke="#fff" stroke-width="2.500" stroke-linejoin="round" paint-order="stroke" >Amess St</text>
<text x="118.3" y="160.3" transform="rotate(-82 118.3 160.3)" font-size="11.7" fill="#6e6e6e" text-anchor="middle" dominant-baseline="central" stroke="#fff" stroke-width="2.500" stroke-linejoin="round" paint-order="stroke" >Amess St</text>
<text x="157.1" y="86.0" transform="rotate(-82 157.1 86.0)" font-size="11.7" fill="#6e6e6e" text-anchor="middle" dominant-baseline="central" stroke="#fff" stroke-width="2.500" stroke-linejoin="round" paint-order="stroke" >Canning St</text>
<text x="180.1" y="86.0" transform="rotate(-82 180.1 86.0)" font-size="11.7" fill="#6e6e6e" text-anchor="middle" dominant-baseline="central" stroke="#fff" stroke-width="2.500" stroke-linejoin="round" paint-order="stroke" >Station St</text>
<text x="169.6" y="165.6" transform="rotate(-82 169.6 165.6)" font-size="11.7" fill="#6e6e6e" text-anchor="middle" dominant-baseline="central" stroke="#fff" stroke-width="2.500" stroke-linejoin="round" paint-order="stroke" >Station St</text>
<text x="266.9" y="89.2" transform="rotate(-82 266.9 89.2)" font-size="11.7" fill="#6e6e6e" text-anchor="middle" dominant-baseline="central" stroke="#fff" stroke-width="2.500" stroke-linejoin="round" paint-order="stroke" >Rae St</text>
<text x="254.4" y="177.1" transform="rotate(-82 254.4 177.1)" font-size="11.7" fill="#6e6e6e" text-anchor="middle" dominant-baseline="central" stroke="#fff" stroke-width="2.500" stroke-linejoin="round" paint-order="stroke" >Rae St</text>
<text x="290.0" y="30.6" transform="rotate(-82 290.0 30.6)" font-size="11.7" fill="#6e6e6e" text-anchor="middle" dominant-baseline="central" stroke="#fff" stroke-width="2.500" stroke-linejoin="round" paint-order="stroke" >Moss St</text>
<text x="292.1" y="113.3" transform="rotate(-82 292.1 113.3)" font-size="11.7" fill="#6e6e6e" text-anchor="middle" dominant-baseline="central" stroke="#fff" stroke-width="2.500" stroke-linejoin="round" paint-order="stroke" >Brunswick St N</text>
<text x="347.5" y="37.9" transform="rotate(-82 347.5 37.9)" font-size="11.7" fill="#6e6e6e" text-anchor="middle" dominant-baseline="central" stroke="#fff" stroke-width="2.500" stroke-linejoin="round" paint-order="stroke" >Best St</text>
<text x="230.3" y="131.0" transform="rotate(8 230.3 131.0)" font-size="11.7" fill="#6e6e6e" text-anchor="middle" dominant-baseline="central" stroke="#fff" stroke-width="2.500" stroke-linejoin="round" paint-order="stroke" >Reid St</text>
<text x="6.4" y="136.3" transform="rotate(8 6.4 136.3)" font-size="11.7" fill="#6e6e6e" text-anchor="middle" dominant-baseline="central" stroke="#fff" stroke-width="2.500" stroke-linejoin="round" paint-order="stroke" >St</text>
<text x="4.3" y="26.4" transform="rotate(0 4.3 26.4)" font-size="11.7" fill="#6e6e6e" text-anchor="middle" dominant-baseline="central" stroke="#fff" stroke-width="2.500" stroke-linejoin="round" paint-order="stroke" >n</text>
<text x="107.9" y="203.4" transform="rotate(8 107.9 203.4)" font-size="11.7" fill="#6e6e6e" text-anchor="middle" dominant-baseline="central" stroke="#fff" stroke-width="2.500" stroke-linejoin="round" paint-order="stroke" >Fenwick St</text>
<text x="85.9" y="265.1" transform="rotate(9 85.9 265.1)" font-size="11.7" fill="#6e6e6e" text-anchor="middle" dominant-baseline="central" stroke="#fff" stroke-width="2.500" stroke-linejoin="round" paint-order="stroke" >Newry St</text>
<text x="100.1" y="287.1" transform="rotate(9 100.1 287.1)" font-size="11.7" fill="#6e6e6e" text-anchor="middle" dominant-baseline="central" stroke="#fff" stroke-width="2.500" stroke-linejoin="round" paint-order="stroke" >Ogrady St</text>
<text x="98.9" y="309.1" transform="rotate(9 98.9 309.1)" font-size="11.7" fill="#6e6e6e" text-anchor="middle" dominant-baseline="central" stroke="#fff" stroke-width="2.500" stroke-linejoin="round" paint-order="stroke" >Lee St</text>
<text x="94.7" y="330.0" transform="rotate(8 94.7 330.0)" font-size="11.7" fill="#6e6e6e" text-anchor="middle" dominant-baseline="central" stroke="#fff" stroke-width="2.500" stroke-linejoin="round" paint-order="stroke" >Davis St</text>
<text x="203.1" y="322.7" transform="rotate(9 203.1 322.7)" font-size="11.7" fill="#6e6e6e" text-anchor="middle" dominant-baseline="central" stroke="#fff" stroke-width="2.500" stroke-linejoin="round" paint-order="stroke" >York St</text>
<text x="235.5" y="305.9" transform="rotate(-82 235.5 305.9)" font-size="11.7" fill="#6e6e6e" text-anchor="middle" dominant-baseline="central" stroke="#fff" stroke-width="2.500" stroke-linejoin="round" paint-order="stroke" >Rae St</text>
<text x="149.1" y="318.5" transform="rotate(-82 149.1 318.5)" font-size="11.7" fill="#6e6e6e" text-anchor="middle" dominant-baseline="central" stroke="#fff" stroke-width="2.500" stroke-linejoin="round" paint-order="stroke" >Station St</text>
<text x="84.9" y="390.7" transform="rotate(-30 84.9 390.7)" font-size="11.7" fill="#6e6e6e" text-anchor="middle" dominant-baseline="central" stroke="#fff" stroke-width="2.500" stroke-linejoin="round" paint-order="stroke" >Neill St</text>
<text x="276.4" y="393.8" transform="rotate(8 276.4 393.8)" font-size="11.7" fill="#6e6e6e" text-anchor="middle" dominant-baseline="central" stroke="#fff" stroke-width="2.500" stroke-linejoin="round" paint-order="stroke" >Cecil St</text>
<text x="138.2" y="394.9" transform="rotate(-82 138.2 394.9)" font-size="11.7" fill="#6e6e6e" text-anchor="middle" dominant-baseline="central" stroke="#fff" stroke-width="2.500" stroke-linejoin="round" paint-order="stroke" >St</text>
<text x="164.4" y="390.7" transform="rotate(-82 164.4 390.7)" font-size="11.7" fill="#6e6e6e" text-anchor="middle" dominant-baseline="central" stroke="#fff" stroke-width="2.500" stroke-linejoin="round" paint-order="stroke" >n St</text>
<text x="429.6" y="40.0" transform="rotate(-80 429.6 40.0)" font-size="11.7" fill="#6e6e6e" text-anchor="middle" dominant-baseline="central" stroke="#fff" stroke-width="2.500" stroke-linejoin="round" paint-order="stroke" >Ivan St</text>
<text x="425.4" y="67.2" transform="rotate(6 425.4 67.2)" font-size="11.7" fill="#6e6e6e" text-anchor="middle" dominant-baseline="central" stroke="#fff" stroke-width="2.500" stroke-linejoin="round" paint-order="stroke" >Tait St</text>
<text x="405.6" y="79.8" transform="rotate(12 405.6 79.8)" font-size="11.7" fill="#6e6e6e" text-anchor="middle" dominant-baseline="central" stroke="#fff" stroke-width="2.500" stroke-linejoin="round" paint-order="stroke" >Scotchmer St</text>
<text x="484.0" y="57.8" transform="rotate(-80 484.0 57.8)" font-size="11.7" fill="#6e6e6e" text-anchor="middle" dominant-baseline="central" stroke="#fff" stroke-width="2.500" stroke-linejoin="round" paint-order="stroke" >Kneen St</text>
<text x="530.1" y="107.0" transform="rotate(77 530.1 107.0)" font-size="11.7" fill="#6e6e6e" text-anchor="middle" dominant-baseline="central" stroke="#fff" stroke-width="2.500" stroke-linejoin="round" paint-order="stroke" >Rushall Cres</text>
<text x="608.6" y="63.0" transform="rotate(10 608.6 63.0)" font-size="11.7" fill="#6e6e6e" text-anchor="middle" dominant-baseline="central" stroke="#fff" stroke-width="2.500" stroke-linejoin="round" paint-order="stroke" >Walker St</text>
<text x="418.1" y="123.7" transform="rotate(-30 418.1 123.7)" font-size="11.7" fill="#6e6e6e" text-anchor="middle" dominant-baseline="central" stroke="#fff" stroke-width="2.500" stroke-linejoin="round" paint-order="stroke" >Falconer St</text>
<text x="688.1" y="177.5" transform="rotate(-20 688.1 177.5)" font-size="11.7" fill="#6e6e6e" text-anchor="middle" dominant-baseline="central" stroke="#fff" stroke-width="2.500" stroke-linejoin="round" paint-order="stroke" >Rose St</text>
<text x="359.5" y="7.6" transform="rotate(32 359.5 7.6)" font-size="11.7" fill="#6e6e6e" text-anchor="middle" dominant-baseline="central" stroke="#fff" stroke-width="2.500" stroke-linejoin="round" paint-order="stroke" >Park St</text>
<text x="419.2" y="239.0" transform="rotate(-27 419.2 239.0)" font-size="11.7" fill="#6e6e6e" text-anchor="middle" dominant-baseline="central" stroke="#fff" stroke-width="2.500" stroke-linejoin="round" paint-order="stroke" >McKean St</text>
<text x="382.5" y="264.1" transform="rotate(66 382.5 264.1)" font-size="11.7" fill="#6e6e6e" text-anchor="middle" dominant-baseline="central" stroke="#fff" stroke-width="2.500" stroke-linejoin="round" paint-order="stroke" >Grant St</text>
<text x="393.6" y="328.9" transform="rotate(-85 393.6 328.9)" font-size="11.7" fill="#6e6e6e" text-anchor="middle" dominant-baseline="central" stroke="#fff" stroke-width="2.500" stroke-linejoin="round" paint-order="stroke" >Smith St</text>
<text x="440.1" y="353.0" transform="rotate(-85 440.1 353.0)" font-size="11.7" fill="#6e6e6e" text-anchor="middle" dominant-baseline="central" stroke="#fff" stroke-width="2.500" stroke-linejoin="round" paint-order="stroke" >Hilton St</text>
<text x="501.8" y="362.4" transform="rotate(-85 501.8 362.4)" font-size="11.7" fill="#6e6e6e" text-anchor="middle" dominant-baseline="central" stroke="#fff" stroke-width="2.500" stroke-linejoin="round" paint-order="stroke" >Gold St</text>
<text x="533.2" y="370.8" transform="rotate(8 533.2 370.8)" font-size="11.7" fill="#6e6e6e" text-anchor="middle" dominant-baseline="central" stroke="#fff" stroke-width="2.500" stroke-linejoin="round" paint-order="stroke" >Noone St</text>
<text x="554.2" y="333.1" transform="rotate(8 554.2 333.1)" font-size="11.7" fill="#6e6e6e" text-anchor="middle" dominant-baseline="central" stroke="#fff" stroke-width="2.500" stroke-linejoin="round" paint-order="stroke" >South Terrace</text>
<text x="647.3" y="346.9" transform="rotate(8 647.3 346.9)" font-size="11.7" fill="#6e6e6e" text-anchor="middle" dominant-baseline="central" stroke="#fff" stroke-width="2.500" stroke-linejoin="round" paint-order="stroke" >Roseneath St</text>
<text x="658.2" y="282.1" transform="rotate(8 658.2 282.1)" font-size="11.7" fill="#6e6e6e" text-anchor="middle" dominant-baseline="central" stroke="#fff" stroke-width="2.500" stroke-linejoin="round" paint-order="stroke" >Ramsden St</text>
<text x="659.8" y="316.4" transform="rotate(-78 659.8 316.4)" font-size="11.7" fill="#6e6e6e" text-anchor="middle" dominant-baseline="central" stroke="#fff" stroke-width="2.500" stroke-linejoin="round" paint-order="stroke" >Myrtle St</text>
<text x="646.2" y="229.5" transform="rotate(-85 646.2 229.5)" font-size="11.7" fill="#6e6e6e" text-anchor="middle" dominant-baseline="central" stroke="#fff" stroke-width="2.500" stroke-linejoin="round" paint-order="stroke" >Grant St</text>
<text x="701.7" y="203.8" transform="rotate(-20 701.7 203.8)" font-size="11.7" fill="#6e6e6e" text-anchor="middle" dominant-baseline="central" stroke="#fff" stroke-width="2.500" stroke-linejoin="round" paint-order="stroke" >George St</text>
<text x="718.4" y="264.5" transform="rotate(8 718.4 264.5)" font-size="11.7" fill="#6e6e6e" text-anchor="middle" dominant-baseline="central" stroke="#fff" stroke-width="2.500" stroke-linejoin="round" paint-order="stroke" >Caroline St</text>
<text x="688.1" y="383.4" transform="rotate(-85 688.1 383.4)" font-size="11.7" fill="#6e6e6e" text-anchor="middle" dominant-baseline="central" stroke="#fff" stroke-width="2.500" stroke-linejoin="round" paint-order="stroke" >om</text>
<text x="701.7" y="336.3" transform="rotate(-80 701.7 336.3)" font-size="11.7" fill="#6e6e6e" text-anchor="middle" dominant-baseline="central" stroke="#fff" stroke-width="2.500" stroke-linejoin="round" paint-order="stroke" >lly</text>
<text x="345.4" y="136.3" transform="rotate(11 345.4 136.3)" font-size="11.7" fill="#6e6e6e" text-anchor="middle" dominant-baseline="central" stroke="#fff" stroke-width="2.500" stroke-linejoin="round" paint-order="stroke" >Alfred</text>
<text x="374.3" y="146.2" transform="rotate(33 374.3 146.2)" font-size="11.7" fill="#6e6e6e" text-anchor="middle" dominant-baseline="central" stroke="#fff" stroke-width="2.500" stroke-linejoin="round" paint-order="stroke" >Cres</text>
<text x="218.2" y="32.3" transform="rotate(-82 218.2 32.3)" font-size="11.7" fill="#6e6e6e" text-anchor="start" dominant-baseline="central" stroke="#fff" stroke-width="2.500" stroke-linejoin="round" paint-order="stroke" >Nicholson St</text>
<text x="305.2" y="54.0" transform="rotate(-82 305.2 54.0)" font-size="11.7" fill="#6e6e6e" text-anchor="start" dominant-baseline="central" stroke="#fff" stroke-width="2.500" stroke-linejoin="round" paint-order="stroke" >Brunswick St</text>
<text x="582.4" y="172.9" transform="rotate(-50 582.4 172.9)" font-size="11.7" fill="#7a4f12" text-anchor="middle" dominant-baseline="central" stroke="#fff" stroke-width="2.500" stroke-linejoin="round" paint-order="stroke" >Queens Parade</text>
<text x="3.2" y="241.5" transform="rotate(0 3.2 241.5)" font-size="15" fill="#857f64" text-anchor="start" dominant-baseline="central" stroke="#fff" stroke-width="2.500" stroke-linejoin="round" paint-order="stroke" letter-spacing="3.200">on North</text>
<text x="657.8" y="240.4" transform="rotate(0 657.8 240.4)" font-size="15" fill="#857f64" text-anchor="start" dominant-baseline="central" stroke="#fff" stroke-width="2.500" stroke-linejoin="round" paint-order="stroke" letter-spacing="3.200">Clifton Hill</text>
<text x="513.3" y="59.9" transform="rotate(0 513.3 59.9)" font-size="11.5" fill="#3d9be9" text-anchor="middle" dominant-baseline="central" stroke="#fff" stroke-width="2.500" stroke-linejoin="round" paint-order="stroke" >Rushall</text>
<text x="595.0" y="223.3" transform="rotate(0 595.0 223.3)" font-size="11.5" fill="#3d9be9" text-anchor="middle" dominant-baseline="central" stroke="#fff" stroke-width="2.500" stroke-linejoin="round" paint-order="stroke" >Clifton Hill</text>
<text x="544.7" y="24.3" transform="rotate(86 544.7 24.3)" font-size="11" fill="#5a8fe6" text-anchor="middle" dominant-baseline="central" stroke="#fff" stroke-width="2.500" stroke-linejoin="round" paint-order="stroke" font-style="italic">Merri Creek</text>
<text x="339.4" y="190.2" transform="rotate(0 339.4 190.2)" font-size="12.5" fill="#4f8a10" text-anchor="middle" dominant-baseline="central" stroke="#fff" stroke-width="2.500" stroke-linejoin="round" paint-order="stroke" font-style="italic">Edinburgh</text>
<text x="339.4" y="203.1" transform="rotate(0 339.4 203.1)" font-size="12.5" fill="#4f8a10" text-anchor="middle" dominant-baseline="central" stroke="#fff" stroke-width="2.500" stroke-linejoin="round" paint-order="stroke" font-style="italic">Gardens</text>
<text x="557.3" y="295.5" transform="rotate(0 557.3 295.5)" font-size="12.5" fill="#4f8a10" text-anchor="middle" dominant-baseline="central" stroke="#fff" stroke-width="2.500" stroke-linejoin="round" paint-order="stroke" font-style="italic">Darling</text>
<text x="557.3" y="309.1" transform="rotate(0 557.3 309.1)" font-size="12.5" fill="#4f8a10" text-anchor="middle" dominant-baseline="central" stroke="#fff" stroke-width="2.500" stroke-linejoin="round" paint-order="stroke" font-style="italic">Gardens</text>
<rect x="535.5" y="53.8" width="10" height="11" rx="1.500" fill="#35a5e8"/><rect x="537.5" y="55.8" width="6" height="5" rx="1" fill="#fff"/><rect x="538.0" y="61.8" width="5" height="1.200" fill="#fff"/>
<rect x="624.5" y="217.8" width="10" height="11" rx="1.500" fill="#35a5e8"/><rect x="626.5" y="219.8" width="6" height="5" rx="1" fill="#fff"/><rect x="627.0" y="225.8" width="5" height="1.200" fill="#fff"/>
<rect x="25.0" y="91.0" width="8" height="8" rx="1" fill="#2fa8ea"/><rect x="26.5" y="93.0" width="5" height="2.800" fill="#fff"/><rect x="27.0" y="96.8" width="4" height=".9" fill="#fff"/>
<rect x="12.8" y="182.5" width="8" height="8" rx="1" fill="#2fa8ea"/><rect x="14.3" y="184.5" width="5" height="2.800" fill="#fff"/><rect x="14.8" y="188.3" width="4" height=".9" fill="#fff"/>
<rect x="208.9" y="45.0" width="8" height="8" rx="1" fill="#2fa8ea"/><rect x="210.4" y="47.0" width="5" height="2.800" fill="#fff"/><rect x="210.9" y="50.8" width="4" height=".9" fill="#fff"/>
<rect x="194.9" y="126.0" width="8" height="8" rx="1" fill="#2fa8ea"/><rect x="196.4" y="128.0" width="5" height="2.800" fill="#fff"/><rect x="196.9" y="131.8" width="4" height=".9" fill="#fff"/>
<rect x="186.5" y="185.6" width="8" height="8" rx="1" fill="#2fa8ea"/><rect x="188.0" y="187.6" width="5" height="2.800" fill="#fff"/><rect x="188.5" y="191.4" width="4" height=".9" fill="#fff"/>
<rect x="347.3" y="71.2" width="8" height="8" rx="1" fill="#2fa8ea"/><rect x="348.8" y="73.2" width="5" height="2.800" fill="#fff"/><rect x="349.3" y="77.0" width="4" height=".9" fill="#fff"/>
<rect x="305.8" y="130.8" width="8" height="8" rx="1" fill="#2fa8ea"/><rect x="307.3" y="132.8" width="5" height="2.800" fill="#fff"/><rect x="307.8" y="136.6" width="4" height=".9" fill="#fff"/>
<rect x="0.7" y="253.2" width="8" height="8" rx="1" fill="#2fa8ea"/><rect x="2.2" y="255.2" width="5" height="2.800" fill="#fff"/><rect x="2.7" y="259.0" width="4" height=".9" fill="#fff"/>
<rect x="177.8" y="255.9" width="8" height="8" rx="1" fill="#2fa8ea"/><rect x="179.3" y="257.9" width="5" height="2.800" fill="#fff"/><rect x="179.8" y="261.7" width="4" height=".9" fill="#fff"/>
<rect x="163.9" y="346.9" width="8" height="8" rx="1" fill="#2fa8ea"/><rect x="165.4" y="348.9" width="5" height="2.800" fill="#fff"/><rect x="165.9" y="352.7" width="4" height=".9" fill="#fff"/>
<rect x="160.8" y="359.5" width="8" height="8" rx="1" fill="#2fa8ea"/><rect x="162.3" y="361.5" width="5" height="2.800" fill="#fff"/><rect x="162.8" y="365.3" width="4" height=".9" fill="#fff"/>
<rect x="264.0" y="215.1" width="8" height="8" rx="1" fill="#2fa8ea"/><rect x="265.5" y="217.1" width="5" height="2.800" fill="#fff"/><rect x="266.0" y="220.9" width="4" height=".9" fill="#fff"/>
<rect x="258.8" y="281.0" width="8" height="8" rx="1" fill="#2fa8ea"/><rect x="260.3" y="283.0" width="5" height="2.800" fill="#fff"/><rect x="260.8" y="286.8" width="4" height=".9" fill="#fff"/>
<rect x="248.9" y="351.7" width="8" height="8" rx="1" fill="#2fa8ea"/><rect x="250.4" y="353.7" width="5" height="2.800" fill="#fff"/><rect x="250.9" y="357.5" width="4" height=".9" fill="#fff"/>
<rect x="242.6" y="371.4" width="8" height="8" rx="1" fill="#2fa8ea"/><rect x="244.1" y="373.4" width="5" height="2.800" fill="#fff"/><rect x="244.6" y="377.2" width="4" height=".9" fill="#fff"/>
<rect x="384.8" y="15.1" width="8" height="8" rx="1" fill="#2fa8ea"/><rect x="386.3" y="17.1" width="5" height="2.800" fill="#fff"/><rect x="386.8" y="20.9" width="4" height=".9" fill="#fff"/>
<rect x="347.1" y="70.5" width="8" height="8" rx="1" fill="#2fa8ea"/><rect x="348.6" y="72.5" width="5" height="2.800" fill="#fff"/><rect x="349.1" y="76.3" width="4" height=".9" fill="#fff"/>
<rect x="653.3" y="-1.0" width="8" height="8" rx="1" fill="#2fa8ea"/><rect x="654.8" y="1.0" width="5" height="2.800" fill="#fff"/><rect x="655.3" y="4.8" width="4" height=".9" fill="#fff"/>
<rect x="640.8" y="75.1" width="8" height="8" rx="1" fill="#2fa8ea"/><rect x="642.3" y="77.1" width="5" height="2.800" fill="#fff"/><rect x="642.8" y="80.9" width="4" height=".9" fill="#fff"/>
<rect x="527.8" y="217.2" width="8" height="8" rx="1" fill="#2fa8ea"/><rect x="529.3" y="219.2" width="5" height="2.800" fill="#fff"/><rect x="529.8" y="223.0" width="4" height=".9" fill="#fff"/>
<rect x="501.0" y="233.9" width="8" height="8" rx="1" fill="#2fa8ea"/><rect x="502.5" y="235.9" width="5" height="2.800" fill="#fff"/><rect x="503.0" y="239.7" width="4" height=".9" fill="#fff"/>
<rect x="466.0" y="250.0" width="8" height="8" rx="1" fill="#2fa8ea"/><rect x="467.5" y="252.0" width="5" height="2.800" fill="#fff"/><rect x="468.0" y="255.8" width="4" height=".9" fill="#fff"/>
<rect x="408.9" y="281.0" width="8" height="8" rx="1" fill="#2fa8ea"/><rect x="410.4" y="283.0" width="5" height="2.800" fill="#fff"/><rect x="410.9" y="286.8" width="4" height=".9" fill="#fff"/>
<rect x="384.8" y="371.4" width="8" height="8" rx="1" fill="#2fa8ea"/><rect x="386.3" y="373.4" width="5" height="2.800" fill="#fff"/><rect x="386.8" y="377.2" width="4" height=".9" fill="#fff"/>
<rect x="378.5" y="387.7" width="8" height="8" rx="1" fill="#2fa8ea"/><rect x="380.0" y="389.7" width="5" height="2.800" fill="#fff"/><rect x="380.5" y="393.5" width="4" height=".9" fill="#fff"/>
<rect x="409.1" y="280.8" width="8" height="8" rx="1" fill="#2fa8ea"/><rect x="410.6" y="282.8" width="5" height="2.800" fill="#fff"/><rect x="411.1" y="286.6" width="4" height=".9" fill="#fff"/>
<path d="M332.1 88.4h14v6.500q0 3-7 6.500q-7-3.500-7-6.500z" fill="#3b63c4"/><text x="339.1" y="96.7" font-size="8.500" font-weight="bold" fill="#fff" text-anchor="middle">45</text>
<path d="M258.5 249.7h14v6.500q0 3-7 6.500q-7-3.500-7-6.500z" fill="#3b63c4"/><text x="265.5" y="258.0" font-size="8.500" font-weight="bold" fill="#fff" text-anchor="middle">45</text>
<path d="M219.1 361.7h14v6.500q0 3-7 6.500q-7-3.500-7-6.500z" fill="#3b63c4"/><text x="226.1" y="370.0" font-size="8.500" font-weight="bold" fill="#fff" text-anchor="middle">46</text>
<path d="M332.8 90.3h14v6.500q0 3-7 6.500q-7-3.500-7-6.500z" fill="#3b63c4"/><text x="339.8" y="98.6" font-size="8.500" font-weight="bold" fill="#fff" text-anchor="middle">45</text>
<path d="M644.9 28.1h14v6.500q0 3-7 6.500q-7-3.500-7-6.500z" fill="#3b63c4"/><text x="651.9" y="36.4" font-size="8.500" font-weight="bold" fill="#fff" text-anchor="middle">29</text>
<path d="M624.6 174.2h14v6.500q0 3-7 6.500q-7-3.500-7-6.500z" fill="#3b63c4"/><text x="631.6" y="182.5" font-size="8.500" font-weight="bold" fill="#fff" text-anchor="middle">46</text>
<path d="M699.9 144.9h14v6.500q0 3-7 6.500q-7-3.500-7-6.500z" fill="#3b63c4"/><text x="706.9" y="153.2" font-size="8.500" font-weight="bold" fill="#fff" text-anchor="middle">46</text>
<path d="M427.2 268.9h14v6.500q0 3-7 6.500q-7-3.500-7-6.500z" fill="#3b63c4"/><text x="434.2" y="277.2" font-size="8.500" font-weight="bold" fill="#fff" text-anchor="middle">46</text>
<path d="M603.7 273.1h14v6.500q0 3-7 6.500q-7-3.500-7-6.500z" fill="#3b63c4"/><text x="610.7" y="281.4" font-size="8.500" font-weight="bold" fill="#fff" text-anchor="middle">29</text>
<path d="M592.2 -5.8h14v6.500q0 3-7 6.500q-7-3.500-7-6.500z" fill="#3b63c4"/><text x="599.2" y="2.5" font-size="8.500" font-weight="bold" fill="#fff" text-anchor="middle">29</text>
<path d="M408.0 386.8h14v6.500q0 3-7 6.500q-7-3.500-7-6.500z" fill="#3b63c4"/><text x="415.0" y="395.1" font-size="8.500" font-weight="bold" fill="#fff" text-anchor="middle">83</text>
<ellipse cx="332.4" cy="168.8" rx="8" ry="2.500" fill="#000" opacity=".12"/>
<defs><linearGradient id="pg" x1="0" y1="0" x2="0" y2="1"><stop offset="0" stop-color="#fb6d61"/><stop offset="1" stop-color="#e6392f"/></linearGradient></defs>
<g transform="translate(327.4 169.8)"><path d="M0 0C-.8-6-3-11-5-16C-7.500-21-10.850-24-10.850-29.400A10.850 10.850 0 0 1 10.850-29.400C10.850-24 7.500-21 5-16C3-11 .8-6 0 0Z" fill="url(#pg)" stroke="#b3271f" stroke-width=".9"/><circle cx="0" cy="-29.600" r="3.500" fill="#4f1010"/></g>
</svg>
<div class="abs" style="left:11px;top:11px;width:94px;height:29px;background:#fff;border-radius:2px;box-shadow:0 1px 4px -1px rgba(0,0,0,.3)"></div>
<div class="abs" style="left:48px;top:11px;width:1px;height:29px;background:#eee"></div>
<span class="t" id="mMap" style="left:20px;top:21px;font-size:11px;font-weight:bold;color:#000">Map</span>
<span class="t" id="mSat" style="left:57px;top:21px;font-size:11px;color:#565656">Satellite</span>
<div class="abs" style="left:418px;top:388px;width:287px;height:13px;background:rgba(245,245,245,.72)"></div>
<span class="t" id="mf1" style="margin-top:.7px;left:423px;top:389px;font-size:10px;color:#444">Map data ©2017 Google</span>
<span class="t" id="mf2" style="margin-top:.7px;left:544px;top:389px;font-size:10px;color:#444">Terms of Use</span>
<span class="t" id="mf3" style="margin-top:.7px;left:614px;top:389px;font-size:10px;color:#444">Report a map error</span>
<div class="abs" style="left:666px;top:284px;width:28px;height:28px;background:#fff;border-radius:2px;box-shadow:0 1px 4px -1px rgba(0,0,0,.3)"></div>
<svg class="abs" style="left:672px;top:286px;width:16px;height:24px" viewBox="0 0 16 24"><circle cx="8" cy="5" r="3" fill="#f5a100"/><path d="M5 8.800h6q1.800 0 1.800 2v5.200q0 .8-.8.800t-.8-.8l-.3-3.500-.3 9q0 1-1 1t-1-1l-.3-5h-.6l-.3 5q0 1-1 1t-1-1l-.3-9-.3 3.500q0 .8-.8.800t-.8-.8v-5.200q0-2 1.800-2z" fill="#f9b416" stroke="#d98a00" stroke-width=".5"/></svg>
<div class="abs" style="left:666px;top:322px;width:28px;height:55px;background:#fff;border-radius:2px;box-shadow:0 1px 4px -1px rgba(0,0,0,.3)"></div>
<div class="abs" style="left:670px;top:349px;width:20px;height:1px;background:#e6e6e6"></div>
<div class="abs" style="left:675px;top:334px;width:12px;height:3px;background:#666"></div><div class="abs" style="left:679.500px;top:329.500px;width:3px;height:12px;background:#666"></div>
<div class="abs" style="left:675px;top:361.500px;width:12px;height:3px;background:#666"></div>
<span class="t" id="glogo" style="left:7px;top:376px;font-size:20.500px;letter-spacing:-.6px;-webkit-text-stroke:.45px currentColor;text-shadow:0 0 2px #fff,0 0 2px #fff,0 0 1px #fff"><span style="color:#4285f4;-webkit-text-stroke:.45px #4285f4">G</span><span style="color:#ea4335;-webkit-text-stroke:.45px #ea4335">o</span><span style="color:#fbbc05;-webkit-text-stroke:.45px #fbbc05">o</span><span style="color:#4285f4;-webkit-text-stroke:.45px #4285f4">g</span><span style="color:#34a853;-webkit-text-stroke:.45px #34a853">l</span><span style="color:#ea4335;-webkit-text-stroke:.45px #ea4335">e</span></span>
</div>
</body>
</html>
